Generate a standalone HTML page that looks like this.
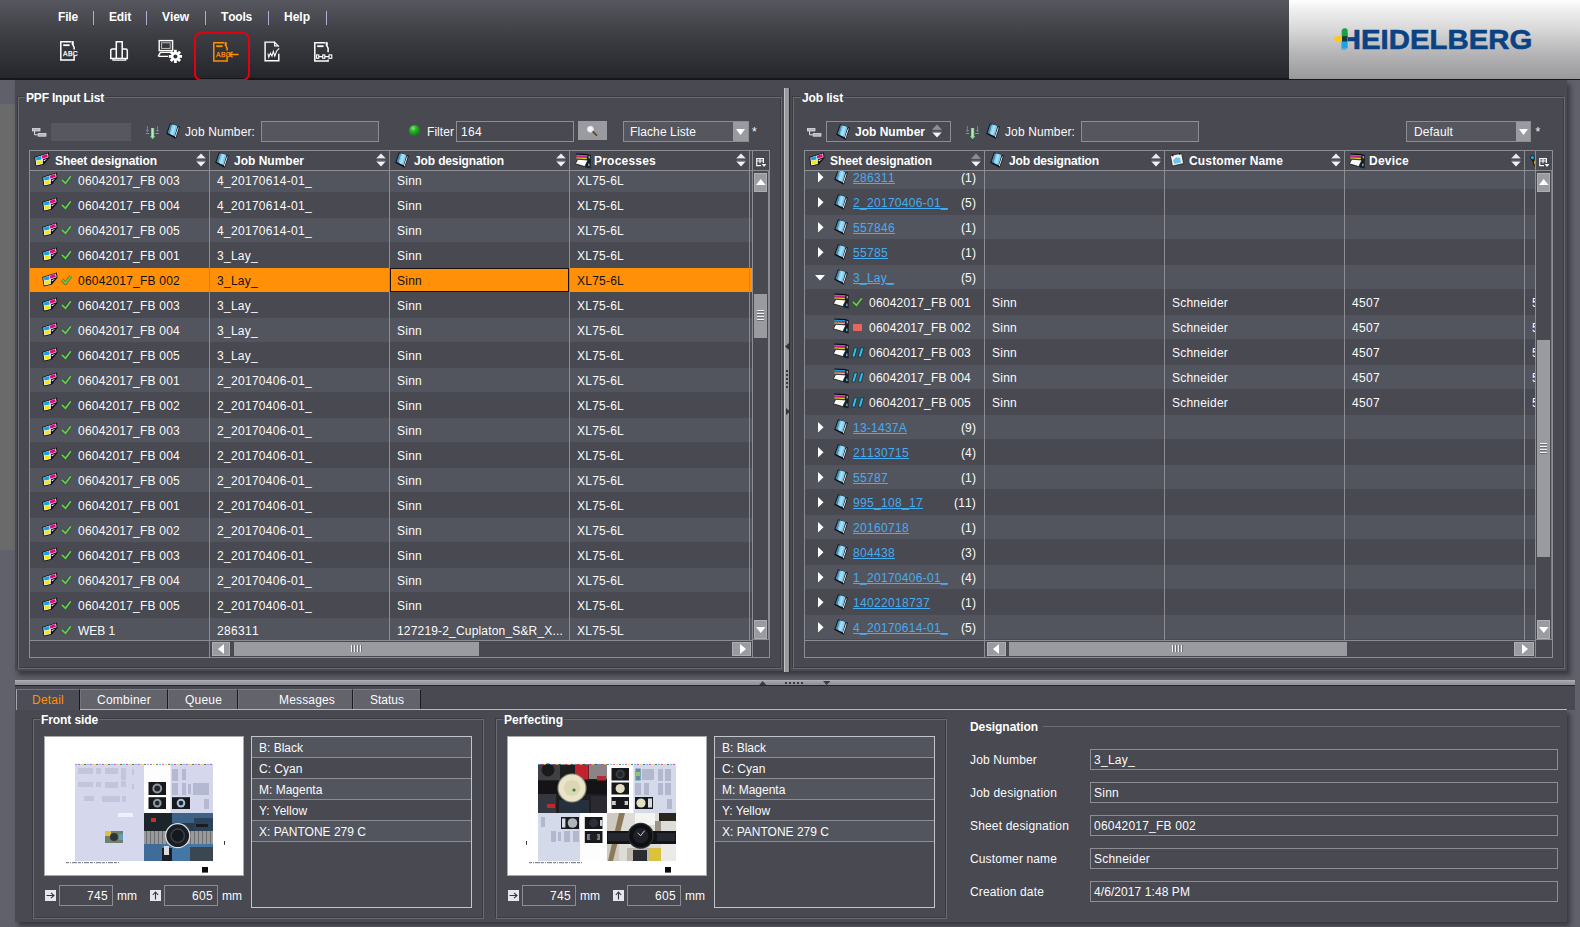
<!DOCTYPE html>
<html><head><meta charset="utf-8"><title>PPF Input List</title>
<style>
html,body{margin:0;padding:0}
body{width:1580px;height:927px;overflow:hidden;position:relative;background:#60616a;font-family:"Liberation Sans",Arial,sans-serif;font-size:12px;color:#fff}
div,svg,a,span{position:absolute;box-sizing:border-box}
.t{white-space:nowrap;line-height:14px;height:14px;color:#fbfbfc;font-kerning:none}
.b{white-space:nowrap;line-height:14px;height:14px;font-weight:bold;color:#fff;font-kerning:none}
.lk{color:#46acf2;text-decoration:underline}
.k{color:#101010}
.in{border:1px solid #8c8d93;background:#55565e}
.sb{background:#9a9ba0}
.sbb{box-shadow:inset 0 0 0 1px #adaeb3}
.pn{background:#484951}
.r0{background:#52555e}
.r1{background:#484951}
.fs{border:1px solid #65666d}
.lg{background:#484951;padding:0 1px;height:14px;line-height:14px;font-weight:bold;white-space:nowrap;font-kerning:none}
</style></head><body>

<div style="left:0px;top:0px;width:1580px;height:79px;background:linear-gradient(#57585f,#3d3e44 45%,#25262b)"></div>
<div style="left:0px;top:78px;width:1580px;height:2px;background:#17171a"></div>
<div style="left:1289px;top:0px;width:291px;height:78.5px;background:linear-gradient(#ffffff 0,#f1f1f1 10%,#d7d7d8 38%,#b7b7b9 66%,#99999b 100%)"></div>
<div class="b" style="left:58px;top:10px;letter-spacing:-0.168px;">File</div>
<div class="b" style="left:109px;top:10px;letter-spacing:-0.166px;">Edit</div>
<div class="b" style="left:162px;top:10px;letter-spacing:-0.086px;">View</div>
<div class="b" style="left:221px;top:10px;letter-spacing:-0.200px;">Tools</div>
<div class="b" style="left:284px;top:10px;letter-spacing:-0.001px;">Help</div>
<div style="left:93px;top:11px;width:1px;height:14px;background:#a9b0d4"></div>
<div style="left:146px;top:11px;width:1px;height:14px;background:#a9b0d4"></div>
<div style="left:205px;top:11px;width:1px;height:14px;background:#a9b0d4"></div>
<div style="left:268px;top:11px;width:1px;height:14px;background:#a9b0d4"></div>
<div style="left:326px;top:11px;width:1px;height:14px;background:#a9b0d4"></div>
<svg class="i" style="left:60px;top:41px" width="28" height="22" viewBox="0 0 28 22"><path d="M14.1 8.6 L14.1 6.2 L12.6 3.4 L12.6 0.8 M11.4 0.8 L0.8 0.8 L0.8 18.9 L14.1 18.9 L14.1 14.6" fill="none" stroke="#ffffff" stroke-width="1.5"/><path d="M12.7 0.1 L12.7 3.6" stroke="#ffffff" stroke-width="1.9"/><rect x="3.2" y="3.3" width="6.4" height="1.8" fill="#ffffff"/><text x="3.1" y="14.9" font-family="Liberation Sans,Arial,sans-serif" font-size="6.8" fill="#ffffff" stroke="#ffffff" stroke-width="0.25" letter-spacing="0.35">ABC</text></svg>
<svg class="i" style="left:109.5px;top:41px" width="20" height="22" viewBox="0 0 20 22"><path d="M6.3 17.4 L6.3 0.75 L12.2 0.75 L12.2 17.4" fill="none" stroke="#fff" stroke-width="1.5"/><path d="M6.3 8.1 L2.4 8.1 Q0.75 8.1 0.75 9.7 L0.75 17.4 L17.3 17.4 L17.3 9.7 Q17.3 8.1 15.7 8.1 L12.2 8.1" fill="none" stroke="#fff" stroke-width="1.5"/><path d="M3 17.4 L3 19.2 L15.6 19.2 L15.6 17.4" fill="none" stroke="#fff" stroke-width="1.3"/></svg>
<svg class="i" style="left:157px;top:39px" width="26" height="24" viewBox="0 0 26 24"><rect x="2.2" y="1.6" width="13.4" height="10" fill="none" stroke="#fff" stroke-width="1.4"/><rect x="4.6" y="3.8" width="8.6" height="5.6" fill="none" stroke="#c8c8cc" stroke-width="0.9"/><path d="M3.4 13.4 L14 13.4 M1.2 17.4 L11 17.4 M3.4 13.4 L1.2 17.4" fill="none" stroke="#fff" stroke-width="1.4"/><g transform="translate(18.4 17.4)"><g fill="#fff"><rect x="-1.4" y="-6.6" width="2.8" height="13.2" transform="rotate(0)"/><rect x="-1.4" y="-6.6" width="2.8" height="13.2" transform="rotate(45)"/><rect x="-1.4" y="-6.6" width="2.8" height="13.2" transform="rotate(90)"/><rect x="-1.4" y="-6.6" width="2.8" height="13.2" transform="rotate(135)"/></g><circle r="4.4" fill="#fff"/><circle r="2" fill="#2f3035"/></g></svg>
<div style="left:193.5px;top:31.5px;width:56.5px;height:49.5px;border:2.5px solid #e6000f;border-radius:7px"></div>
<svg class="i" style="left:213px;top:42px" width="28" height="22" viewBox="0 0 28 22"><path d="M14.1 8.6 L14.1 6.2 L12.6 3.4 L12.6 0.8 M11.4 0.8 L0.8 0.8 L0.8 18.9 L14.1 18.9 L14.1 14.6" fill="none" stroke="#ff9000" stroke-width="1.5"/><path d="M12.7 0.1 L12.7 3.6" stroke="#ff9000" stroke-width="1.9"/><rect x="3.2" y="3.3" width="6.4" height="1.8" fill="#ff9000"/><text x="3.1" y="14.9" font-family="Liberation Sans,Arial,sans-serif" font-size="6.8" fill="#ff9000" stroke="#ff9000" stroke-width="0.25" letter-spacing="0.35">ABC</text><path d="M25.6 12.5 L16.4 12.5 M19.6 9.7 L16.2 12.5 L19.6 15.3" fill="none" stroke="#ff9000" stroke-width="1.3"/></svg>
<svg class="i" style="left:264.2px;top:40.8px" width="19" height="22" viewBox="0 0 19 22"><path d="M10.6 1.1 L1.1 1.1 L1.1 19.8 L14.8 19.8 L14.8 12.8" fill="none" stroke="#fff" stroke-width="1.45"/><path d="M10.6 0.5 L10.6 4.9 L14.6 4.9 M10.6 1.1 L15 5.6" fill="none" stroke="#fff" stroke-width="1.1"/><path d="M3.9 12.5 L4.8 16.3 L6.4 12.2 L8 15.1 L9.3 10.3 L10.8 15.1 L12.7 10 L15.2 7.4" fill="none" stroke="#fff" stroke-width="1.05"/></svg>
<svg class="i" style="left:314px;top:42px" width="28" height="22" viewBox="0 0 28 22"><path d="M14.1 10.2 L14.1 6.2 L12.6 3.4 L12.6 0.8 M11.4 0.8 L0.8 0.8 L0.8 18.9 L14.1 18.9 L14.1 17.6" fill="none" stroke="#ffffff" stroke-width="1.5"/><path d="M12.7 0.1 L12.7 3.6" stroke="#ffffff" stroke-width="1.9"/><rect x="3.2" y="3.3" width="6.4" height="1.8" fill="#ffffff"/><g fill="none" stroke="#fff" stroke-width="1.1"><rect x="2.6" y="12.9" width="2.2" height="3.4"/><rect x="8.7" y="12.9" width="2.1" height="3.4"/><rect x="15" y="12.9" width="2.8" height="3.4"/><path d="M4.8 14.6 L8.7 14.6 M10.8 14.6 L15 14.6"/></g></svg>
<svg class="i" style="left:1330px;top:24px" width="214" height="30" viewBox="0 0 214 30"><text x="9.8" y="24.5" font-family="Liberation Sans,Arial,sans-serif" font-weight="bold" font-size="28" fill="#0b4382" textLength="192.6" lengthAdjust="spacingAndGlyphs" stroke="#0b4382" stroke-width="0.6">HEIDELBERG</text><linearGradient id="lgp" x1="0" y1="0" x2="0" y2="1"><stop offset="0" stop-color="#dadadb"/><stop offset="1" stop-color="#bbbbbd"/></linearGradient><rect x="11.4" y="3" width="6.6" height="22" fill="url(#lgp)"/><rect x="12" y="4.2" width="5.6" height="9.6" rx="2.4" fill="#17a046"/><rect x="12" y="9" width="5.6" height="4" fill="#17a046"/><path d="M3 14.9 L6.4 12.2 L13 12.2 L13 17.6 L6.4 17.6 Z" fill="#fdc816"/><rect x="12" y="17.4" width="5.6" height="7.2" fill="#19a6e4"/><rect x="12" y="12.2" width="5.6" height="5.4" fill="#143a3c"/></svg>
<div style="left:0px;top:80px;width:15px;height:24px;background:#5f6069"></div>
<div style="left:0px;top:104px;width:15px;height:446px;background:#6a6a6b"></div>
<div class="pn" style="left:15px;top:80px;width:1552px;height:591px;box-shadow:3px 4px 5px rgba(20,20,25,.55)"></div>
<div style="left:784px;top:88px;width:6px;height:584px;background:linear-gradient(90deg,#c4c5c9 0,#c4c5c9 1px,#98999e 1px,#98999e 5px,#2a2b2f 5px)"></div>
<svg class="i" style="left:785px;top:343px" width="4" height="7" viewBox="0 0 4 7"><path d="M4 0 L0 3.5 L4 7 Z" fill="#34353b"/></svg>
<svg class="i" style="left:786px;top:408px" width="4" height="7" viewBox="0 0 4 7"><path d="M0 0 L4 3.5 L0 7 Z" fill="#34353b"/></svg>
<div style="left:786px;top:370px;width:2px;height:2px;background:#3a3b41"></div>
<div style="left:786px;top:374px;width:2px;height:2px;background:#3a3b41"></div>
<div style="left:786px;top:378px;width:2px;height:2px;background:#3a3b41"></div>
<div style="left:786px;top:382px;width:2px;height:2px;background:#3a3b41"></div>
<div style="left:786px;top:386px;width:2px;height:2px;background:#3a3b41"></div>
<div style="left:17px;top:96px;width:764px;height:572px;border:1px solid #3b3c42"></div><div style="left:18px;top:97px;width:764px;height:572px;border:1px solid #6a6b72"></div>
<div style="left:792px;top:96px;width:772px;height:572px;border:1px solid #3b3c42"></div><div style="left:793px;top:97px;width:772px;height:572px;border:1px solid #6a6b72"></div>
<div class="lg" style="left:25px;top:91px;letter-spacing:-0.190px;">PPF Input List</div>
<div class="lg" style="left:801px;top:91px;letter-spacing:-0.126px;">Job list</div>
<svg class="i" style="left:32px;top:128px" width="15" height="10" viewBox="0 0 15 10"><rect x="0.4" y="0.4" width="7.6" height="2.6" fill="#b4b5bb" stroke="#e4e4e8" stroke-width="0.7"/><rect x="6.2" y="5.4" width="7.8" height="2.8" fill="#b4b5bb" stroke="#e4e4e8" stroke-width="0.7"/><path d="M2.6 3 L2.6 6.8 L6 6.8" fill="none" stroke="#e4e4e8" stroke-width="1"/></svg>
<div style="left:51px;top:123px;width:80px;height:18px;background:#56575f"></div>
<svg class="i" style="left:145px;top:125px" width="15" height="15" viewBox="0 0 15 15"><path d="M2.4 1 L2.4 6.4 M0.9 5 L2.4 6.6 L3.9 5 M12.5 1 L12.5 6.4 M11 5 L12.5 6.6 L14 5" stroke="#7f869c" stroke-width="0.9" fill="none"/><path d="M0.9 8.5 L4.2 8.5 M10.2 8.5 L14 8.5" stroke="#8f9ac0" stroke-width="0.9" fill="none"/><path d="M6 2.9 L9.2 2.9 L9.2 11.3 L10.4 11.3 L7.6 14.2 L4.8 11.3 L6 11.3 Z" fill="#7cd888"/><path d="M7.1 3.4 L8.1 3.4 L8.1 12 L7.1 12 Z" fill="#c4f0c8"/></svg>
<svg class="i" style="left:166px;top:123px" width="14" height="16" viewBox="0 0 14 16"><path d="M4 0.2 L13.9 3.8 L9.7 15.7 L0.2 10.8 Z" fill="#0e0e12"/><path d="M4.5 1.3 L6 1.8 L3.4 10.8 L1.5 9.9 Z" fill="#4a8aa8"/><path d="M5.9 1.3 L11.5 3.1 L8.6 13.2 L3.3 10.7 Z" fill="#7ccbf0"/><path d="M7.4 1.9 L9.6 2.6 L7 12.3 L4.8 11.3 Z" fill="#a6def8"/><path d="M12 4.2 L12.8 4.6 L9.6 14.4 L8.8 13.8 Z" fill="#f4f4f4"/></svg>
<div class="t" style="left:185px;top:125px;letter-spacing:0.119px;">Job Number:</div>
<div class="in" style="left:261px;top:121px;width:118px;height:21px;"></div>
<div style="left:409px;top:125px;width:11px;height:11px;border-radius:6px;background:radial-gradient(circle at 38% 30%,#86ee72 0,#2cb62a 28%,#178a1a 62%,#0b5810 100%)"></div>
<div class="t" style="left:427px;top:125px;letter-spacing:0.056px;">Filter</div>
<div style="left:456px;top:121px;width:118px;height:21px;border:1px solid #8c8d93;background:#484951"><div class="t" style="left:4px;top:3px;letter-spacing:0.326px;">164</div></div>
<div style="left:578px;top:121px;width:29px;height:19px;background:#9a9ba0"><svg class="i" style="left:8px;top:4px" width="13" height="12" viewBox="0 0 13 12"><circle cx="4.4" cy="4.2" r="3" fill="#f4f4f4" stroke="#e0e0e0" stroke-width="1"/><path d="M6.6 6.4 L11 10.6" stroke="#5a4a2a" stroke-width="1.8"/></svg></div>
<div class="in" style="left:623px;top:121px;width:126px;height:21px;"><div class="t" style="left:6px;top:3px;letter-spacing:0.108px;">Flache Liste</div><div style="left:109px;top:0px;width:15px;height:19px;background:#9a9ba0"><svg class="i" style="left:3px;top:7px" width="9" height="6" viewBox="0 0 9 6"><path d="M0 0 L9 0 L4.5 6 Z" fill="#fff"/></svg></div></div>
<div class="t" style="left:752px;top:125px;letter-spacing:0.330px;">*</div>
<svg class="i" style="left:807px;top:128px" width="15" height="10" viewBox="0 0 15 10"><rect x="0.4" y="0.4" width="7.6" height="2.6" fill="#b4b5bb" stroke="#e4e4e8" stroke-width="0.7"/><rect x="6.2" y="5.4" width="7.8" height="2.8" fill="#b4b5bb" stroke="#e4e4e8" stroke-width="0.7"/><path d="M2.6 3 L2.6 6.8 L6 6.8" fill="none" stroke="#e4e4e8" stroke-width="1"/></svg>
<div style="left:826px;top:121px;width:125px;height:21px;border:1px solid #8c8d93;background:#484951"><svg class="i" style="left:9px;top:2px" width="14" height="16" viewBox="0 0 14 16"><path d="M4 0.2 L13.9 3.8 L9.7 15.7 L0.2 10.8 Z" fill="#0e0e12"/><path d="M4.5 1.3 L6 1.8 L3.4 10.8 L1.5 9.9 Z" fill="#4a8aa8"/><path d="M5.9 1.3 L11.5 3.1 L8.6 13.2 L3.3 10.7 Z" fill="#7ccbf0"/><path d="M7.4 1.9 L9.6 2.6 L7 12.3 L4.8 11.3 Z" fill="#a6def8"/><path d="M12 4.2 L12.8 4.6 L9.6 14.4 L8.8 13.8 Z" fill="#f4f4f4"/></svg><div class="b" style="left:28px;top:3px;letter-spacing:-0.001px;">Job Number</div><svg class="i" style="left:104.5px;top:2px" width="10" height="14" viewBox="0 0 10 14"><path d="M5 0.4 L9.6 5.2 L0.4 5.2 Z" fill="#8e8f95"/><path d="M0.4 8.6 L9.6 8.6 L5 13.6 Z" fill="#f1f2fa"/><rect x="0.4" y="5.2" width="9.2" height="0.9" fill="#8f9098"/><rect x="0.4" y="7.7" width="9.2" height="0.9" fill="#8f9098"/></svg></div>
<svg class="i" style="left:965px;top:125px" width="15" height="15" viewBox="0 0 15 15"><path d="M2.4 1 L2.4 6.4 M0.9 5 L2.4 6.6 L3.9 5 M12.5 1 L12.5 6.4 M11 5 L12.5 6.6 L14 5" stroke="#7f869c" stroke-width="0.9" fill="none"/><path d="M0.9 8.5 L4.2 8.5 M10.2 8.5 L14 8.5" stroke="#8f9ac0" stroke-width="0.9" fill="none"/><path d="M6 2.9 L9.2 2.9 L9.2 11.3 L10.4 11.3 L7.6 14.2 L4.8 11.3 L6 11.3 Z" fill="#7cd888"/><path d="M7.1 3.4 L8.1 3.4 L8.1 12 L7.1 12 Z" fill="#c4f0c8"/></svg>
<svg class="i" style="left:986px;top:123px" width="14" height="16" viewBox="0 0 14 16"><path d="M4 0.2 L13.9 3.8 L9.7 15.7 L0.2 10.8 Z" fill="#0e0e12"/><path d="M4.5 1.3 L6 1.8 L3.4 10.8 L1.5 9.9 Z" fill="#4a8aa8"/><path d="M5.9 1.3 L11.5 3.1 L8.6 13.2 L3.3 10.7 Z" fill="#7ccbf0"/><path d="M7.4 1.9 L9.6 2.6 L7 12.3 L4.8 11.3 Z" fill="#a6def8"/><path d="M12 4.2 L12.8 4.6 L9.6 14.4 L8.8 13.8 Z" fill="#f4f4f4"/></svg>
<div class="t" style="left:1005px;top:125px;letter-spacing:0.119px;">Job Number:</div>
<div class="in" style="left:1081px;top:121px;width:118px;height:21px;"></div>
<div class="in" style="left:1406px;top:121px;width:125px;height:21px;"><div class="t" style="left:7px;top:3px;letter-spacing:0.140px;">Default</div><div style="left:109px;top:0px;width:14px;height:19px;background:#9a9ba0"><svg class="i" style="left:3px;top:7px" width="9" height="6" viewBox="0 0 9 6"><path d="M0 0 L9 0 L4.5 6 Z" fill="#fff"/></svg></div></div>
<div class="t" style="left:1535.5px;top:125px;letter-spacing:0.330px;">*</div>
<div style="left:29px;top:150px;width:741px;height:508px;border:1px solid #8c8d93;background:#484951"></div>
<div style="left:30px;top:171px;width:722px;height:469px;overflow:hidden"><div style="left:0px;top:-3px;width:722px;height:24px;background:#52555e"><svg class="i" style="left:12px;top:4px" width="16" height="15" viewBox="0 0 16 15"><path d="M0.2 5 L14.9 0.5 L15.5 5.8 L9.8 12.6 L1.8 14.6 Z" fill="#0c0c0e"/><path d="M1.3 5.5 L14 1.5 L14.5 5.3 L8.9 7.3 L8.8 12 L2.3 13.6 Z" fill="#fafafa"/><path d="M1.9 5.6 L7.3 4.1 L7.6 7.6 L2.4 8.6 Z" fill="#12a0e6"/><path d="M7.9 3.7 L13.3 2.1 L13.8 5.1 L8.3 6.8 Z" fill="#e0087e"/><path d="M2.5 8.9 L7.6 7.9 L7.9 11.4 L2.9 12.7 Z" fill="#fae600"/><path d="M9.4 8.2 L13.4 6.7 L10 9.6 Z" fill="#f0f0f0"/></svg><svg class="i" style="left:31px;top:7px" width="11" height="10" viewBox="0 0 11 10"><path d="M0.9 4.8 L4.5 8.4 L9.8 1.2" fill="none" stroke="#2b2d30" stroke-width="3.2" stroke-opacity=".55"/><path d="M0.9 4.8 L4.5 8.4 L9.8 1.2" fill="none" stroke="#60cc48" stroke-width="1.9"/></svg><div class="t" style="left:48px;top:6px;letter-spacing:0.216px;">06042017_FB 003</div><div class="t" style="left:187px;top:6px;letter-spacing:0.303px;">4_20170614-01_</div><div class="t" style="left:367px;top:6px;letter-spacing:0.246px;">Sinn</div><div class="t" style="left:547px;top:6px;letter-spacing:0.233px;">XL75-6L</div></div><div style="left:0px;top:22px;width:722px;height:24px;background:#484951"><svg class="i" style="left:12px;top:4px" width="16" height="15" viewBox="0 0 16 15"><path d="M0.2 5 L14.9 0.5 L15.5 5.8 L9.8 12.6 L1.8 14.6 Z" fill="#0c0c0e"/><path d="M1.3 5.5 L14 1.5 L14.5 5.3 L8.9 7.3 L8.8 12 L2.3 13.6 Z" fill="#fafafa"/><path d="M1.9 5.6 L7.3 4.1 L7.6 7.6 L2.4 8.6 Z" fill="#12a0e6"/><path d="M7.9 3.7 L13.3 2.1 L13.8 5.1 L8.3 6.8 Z" fill="#e0087e"/><path d="M2.5 8.9 L7.6 7.9 L7.9 11.4 L2.9 12.7 Z" fill="#fae600"/><path d="M9.4 8.2 L13.4 6.7 L10 9.6 Z" fill="#f0f0f0"/></svg><svg class="i" style="left:31px;top:7px" width="11" height="10" viewBox="0 0 11 10"><path d="M0.9 4.8 L4.5 8.4 L9.8 1.2" fill="none" stroke="#2b2d30" stroke-width="3.2" stroke-opacity=".55"/><path d="M0.9 4.8 L4.5 8.4 L9.8 1.2" fill="none" stroke="#60cc48" stroke-width="1.9"/></svg><div class="t" style="left:48px;top:6px;letter-spacing:0.216px;">06042017_FB 004</div><div class="t" style="left:187px;top:6px;letter-spacing:0.303px;">4_20170614-01_</div><div class="t" style="left:367px;top:6px;letter-spacing:0.246px;">Sinn</div><div class="t" style="left:547px;top:6px;letter-spacing:0.233px;">XL75-6L</div></div><div style="left:0px;top:47px;width:722px;height:24px;background:#52555e"><svg class="i" style="left:12px;top:4px" width="16" height="15" viewBox="0 0 16 15"><path d="M0.2 5 L14.9 0.5 L15.5 5.8 L9.8 12.6 L1.8 14.6 Z" fill="#0c0c0e"/><path d="M1.3 5.5 L14 1.5 L14.5 5.3 L8.9 7.3 L8.8 12 L2.3 13.6 Z" fill="#fafafa"/><path d="M1.9 5.6 L7.3 4.1 L7.6 7.6 L2.4 8.6 Z" fill="#12a0e6"/><path d="M7.9 3.7 L13.3 2.1 L13.8 5.1 L8.3 6.8 Z" fill="#e0087e"/><path d="M2.5 8.9 L7.6 7.9 L7.9 11.4 L2.9 12.7 Z" fill="#fae600"/><path d="M9.4 8.2 L13.4 6.7 L10 9.6 Z" fill="#f0f0f0"/></svg><svg class="i" style="left:31px;top:7px" width="11" height="10" viewBox="0 0 11 10"><path d="M0.9 4.8 L4.5 8.4 L9.8 1.2" fill="none" stroke="#2b2d30" stroke-width="3.2" stroke-opacity=".55"/><path d="M0.9 4.8 L4.5 8.4 L9.8 1.2" fill="none" stroke="#60cc48" stroke-width="1.9"/></svg><div class="t" style="left:48px;top:6px;letter-spacing:0.216px;">06042017_FB 005</div><div class="t" style="left:187px;top:6px;letter-spacing:0.303px;">4_20170614-01_</div><div class="t" style="left:367px;top:6px;letter-spacing:0.246px;">Sinn</div><div class="t" style="left:547px;top:6px;letter-spacing:0.233px;">XL75-6L</div></div><div style="left:0px;top:72px;width:722px;height:24px;background:#484951"><svg class="i" style="left:12px;top:4px" width="16" height="15" viewBox="0 0 16 15"><path d="M0.2 5 L14.9 0.5 L15.5 5.8 L9.8 12.6 L1.8 14.6 Z" fill="#0c0c0e"/><path d="M1.3 5.5 L14 1.5 L14.5 5.3 L8.9 7.3 L8.8 12 L2.3 13.6 Z" fill="#fafafa"/><path d="M1.9 5.6 L7.3 4.1 L7.6 7.6 L2.4 8.6 Z" fill="#12a0e6"/><path d="M7.9 3.7 L13.3 2.1 L13.8 5.1 L8.3 6.8 Z" fill="#e0087e"/><path d="M2.5 8.9 L7.6 7.9 L7.9 11.4 L2.9 12.7 Z" fill="#fae600"/><path d="M9.4 8.2 L13.4 6.7 L10 9.6 Z" fill="#f0f0f0"/></svg><svg class="i" style="left:31px;top:7px" width="11" height="10" viewBox="0 0 11 10"><path d="M0.9 4.8 L4.5 8.4 L9.8 1.2" fill="none" stroke="#2b2d30" stroke-width="3.2" stroke-opacity=".55"/><path d="M0.9 4.8 L4.5 8.4 L9.8 1.2" fill="none" stroke="#60cc48" stroke-width="1.9"/></svg><div class="t" style="left:48px;top:6px;letter-spacing:0.216px;">06042017_FB 001</div><div class="t" style="left:187px;top:6px;letter-spacing:0.272px;">3_Lay_</div><div class="t" style="left:367px;top:6px;letter-spacing:0.246px;">Sinn</div><div class="t" style="left:547px;top:6px;letter-spacing:0.233px;">XL75-6L</div></div><div style="left:0px;top:97px;width:722px;height:24px;background:#ff9008"><svg class="i" style="left:12px;top:4px" width="16" height="15" viewBox="0 0 16 15"><path d="M0.2 5 L14.9 0.5 L15.5 5.8 L9.8 12.6 L1.8 14.6 Z" fill="#0c0c0e"/><path d="M1.3 5.5 L14 1.5 L14.5 5.3 L8.9 7.3 L8.8 12 L2.3 13.6 Z" fill="#fafafa"/><path d="M1.9 5.6 L7.3 4.1 L7.6 7.6 L2.4 8.6 Z" fill="#12a0e6"/><path d="M7.9 3.7 L13.3 2.1 L13.8 5.1 L8.3 6.8 Z" fill="#e0087e"/><path d="M2.5 8.9 L7.6 7.9 L7.9 11.4 L2.9 12.7 Z" fill="#fae600"/><path d="M9.4 8.2 L13.4 6.7 L10 9.6 Z" fill="#f0f0f0"/></svg><svg class="i" style="left:31px;top:7px" width="11" height="10" viewBox="0 0 11 10"><path d="M0.9 4.8 L4.5 8.4 L9.8 1.2" fill="none" stroke="#2b2d30" stroke-width="3.2" stroke-opacity=".55"/><path d="M0.9 4.8 L4.5 8.4 L9.8 1.2" fill="none" stroke="#60cc48" stroke-width="1.9"/></svg><div class="t k" style="left:48px;top:6px;letter-spacing:0.216px;">06042017_FB 002</div><div class="t k" style="left:187px;top:6px;letter-spacing:0.272px;">3_Lay_</div><div class="t k" style="left:367px;top:6px;letter-spacing:0.246px;">Sinn</div><div class="t k" style="left:547px;top:6px;letter-spacing:0.233px;">XL75-6L</div><div style="left:360px;top:0px;width:179px;height:24px;border:1px solid #111"></div></div><div style="left:0px;top:122px;width:722px;height:24px;background:#484951"><svg class="i" style="left:12px;top:4px" width="16" height="15" viewBox="0 0 16 15"><path d="M0.2 5 L14.9 0.5 L15.5 5.8 L9.8 12.6 L1.8 14.6 Z" fill="#0c0c0e"/><path d="M1.3 5.5 L14 1.5 L14.5 5.3 L8.9 7.3 L8.8 12 L2.3 13.6 Z" fill="#fafafa"/><path d="M1.9 5.6 L7.3 4.1 L7.6 7.6 L2.4 8.6 Z" fill="#12a0e6"/><path d="M7.9 3.7 L13.3 2.1 L13.8 5.1 L8.3 6.8 Z" fill="#e0087e"/><path d="M2.5 8.9 L7.6 7.9 L7.9 11.4 L2.9 12.7 Z" fill="#fae600"/><path d="M9.4 8.2 L13.4 6.7 L10 9.6 Z" fill="#f0f0f0"/></svg><svg class="i" style="left:31px;top:7px" width="11" height="10" viewBox="0 0 11 10"><path d="M0.9 4.8 L4.5 8.4 L9.8 1.2" fill="none" stroke="#2b2d30" stroke-width="3.2" stroke-opacity=".55"/><path d="M0.9 4.8 L4.5 8.4 L9.8 1.2" fill="none" stroke="#60cc48" stroke-width="1.9"/></svg><div class="t" style="left:48px;top:6px;letter-spacing:0.216px;">06042017_FB 003</div><div class="t" style="left:187px;top:6px;letter-spacing:0.272px;">3_Lay_</div><div class="t" style="left:367px;top:6px;letter-spacing:0.246px;">Sinn</div><div class="t" style="left:547px;top:6px;letter-spacing:0.233px;">XL75-6L</div></div><div style="left:0px;top:147px;width:722px;height:24px;background:#52555e"><svg class="i" style="left:12px;top:4px" width="16" height="15" viewBox="0 0 16 15"><path d="M0.2 5 L14.9 0.5 L15.5 5.8 L9.8 12.6 L1.8 14.6 Z" fill="#0c0c0e"/><path d="M1.3 5.5 L14 1.5 L14.5 5.3 L8.9 7.3 L8.8 12 L2.3 13.6 Z" fill="#fafafa"/><path d="M1.9 5.6 L7.3 4.1 L7.6 7.6 L2.4 8.6 Z" fill="#12a0e6"/><path d="M7.9 3.7 L13.3 2.1 L13.8 5.1 L8.3 6.8 Z" fill="#e0087e"/><path d="M2.5 8.9 L7.6 7.9 L7.9 11.4 L2.9 12.7 Z" fill="#fae600"/><path d="M9.4 8.2 L13.4 6.7 L10 9.6 Z" fill="#f0f0f0"/></svg><svg class="i" style="left:31px;top:7px" width="11" height="10" viewBox="0 0 11 10"><path d="M0.9 4.8 L4.5 8.4 L9.8 1.2" fill="none" stroke="#2b2d30" stroke-width="3.2" stroke-opacity=".55"/><path d="M0.9 4.8 L4.5 8.4 L9.8 1.2" fill="none" stroke="#60cc48" stroke-width="1.9"/></svg><div class="t" style="left:48px;top:6px;letter-spacing:0.216px;">06042017_FB 004</div><div class="t" style="left:187px;top:6px;letter-spacing:0.272px;">3_Lay_</div><div class="t" style="left:367px;top:6px;letter-spacing:0.246px;">Sinn</div><div class="t" style="left:547px;top:6px;letter-spacing:0.233px;">XL75-6L</div></div><div style="left:0px;top:172px;width:722px;height:24px;background:#484951"><svg class="i" style="left:12px;top:4px" width="16" height="15" viewBox="0 0 16 15"><path d="M0.2 5 L14.9 0.5 L15.5 5.8 L9.8 12.6 L1.8 14.6 Z" fill="#0c0c0e"/><path d="M1.3 5.5 L14 1.5 L14.5 5.3 L8.9 7.3 L8.8 12 L2.3 13.6 Z" fill="#fafafa"/><path d="M1.9 5.6 L7.3 4.1 L7.6 7.6 L2.4 8.6 Z" fill="#12a0e6"/><path d="M7.9 3.7 L13.3 2.1 L13.8 5.1 L8.3 6.8 Z" fill="#e0087e"/><path d="M2.5 8.9 L7.6 7.9 L7.9 11.4 L2.9 12.7 Z" fill="#fae600"/><path d="M9.4 8.2 L13.4 6.7 L10 9.6 Z" fill="#f0f0f0"/></svg><svg class="i" style="left:31px;top:7px" width="11" height="10" viewBox="0 0 11 10"><path d="M0.9 4.8 L4.5 8.4 L9.8 1.2" fill="none" stroke="#2b2d30" stroke-width="3.2" stroke-opacity=".55"/><path d="M0.9 4.8 L4.5 8.4 L9.8 1.2" fill="none" stroke="#60cc48" stroke-width="1.9"/></svg><div class="t" style="left:48px;top:6px;letter-spacing:0.216px;">06042017_FB 005</div><div class="t" style="left:187px;top:6px;letter-spacing:0.272px;">3_Lay_</div><div class="t" style="left:367px;top:6px;letter-spacing:0.246px;">Sinn</div><div class="t" style="left:547px;top:6px;letter-spacing:0.233px;">XL75-6L</div></div><div style="left:0px;top:197px;width:722px;height:24px;background:#52555e"><svg class="i" style="left:12px;top:4px" width="16" height="15" viewBox="0 0 16 15"><path d="M0.2 5 L14.9 0.5 L15.5 5.8 L9.8 12.6 L1.8 14.6 Z" fill="#0c0c0e"/><path d="M1.3 5.5 L14 1.5 L14.5 5.3 L8.9 7.3 L8.8 12 L2.3 13.6 Z" fill="#fafafa"/><path d="M1.9 5.6 L7.3 4.1 L7.6 7.6 L2.4 8.6 Z" fill="#12a0e6"/><path d="M7.9 3.7 L13.3 2.1 L13.8 5.1 L8.3 6.8 Z" fill="#e0087e"/><path d="M2.5 8.9 L7.6 7.9 L7.9 11.4 L2.9 12.7 Z" fill="#fae600"/><path d="M9.4 8.2 L13.4 6.7 L10 9.6 Z" fill="#f0f0f0"/></svg><svg class="i" style="left:31px;top:7px" width="11" height="10" viewBox="0 0 11 10"><path d="M0.9 4.8 L4.5 8.4 L9.8 1.2" fill="none" stroke="#2b2d30" stroke-width="3.2" stroke-opacity=".55"/><path d="M0.9 4.8 L4.5 8.4 L9.8 1.2" fill="none" stroke="#60cc48" stroke-width="1.9"/></svg><div class="t" style="left:48px;top:6px;letter-spacing:0.216px;">06042017_FB 001</div><div class="t" style="left:187px;top:6px;letter-spacing:0.303px;">2_20170406-01_</div><div class="t" style="left:367px;top:6px;letter-spacing:0.246px;">Sinn</div><div class="t" style="left:547px;top:6px;letter-spacing:0.233px;">XL75-6L</div></div><div style="left:0px;top:222px;width:722px;height:24px;background:#484951"><svg class="i" style="left:12px;top:4px" width="16" height="15" viewBox="0 0 16 15"><path d="M0.2 5 L14.9 0.5 L15.5 5.8 L9.8 12.6 L1.8 14.6 Z" fill="#0c0c0e"/><path d="M1.3 5.5 L14 1.5 L14.5 5.3 L8.9 7.3 L8.8 12 L2.3 13.6 Z" fill="#fafafa"/><path d="M1.9 5.6 L7.3 4.1 L7.6 7.6 L2.4 8.6 Z" fill="#12a0e6"/><path d="M7.9 3.7 L13.3 2.1 L13.8 5.1 L8.3 6.8 Z" fill="#e0087e"/><path d="M2.5 8.9 L7.6 7.9 L7.9 11.4 L2.9 12.7 Z" fill="#fae600"/><path d="M9.4 8.2 L13.4 6.7 L10 9.6 Z" fill="#f0f0f0"/></svg><svg class="i" style="left:31px;top:7px" width="11" height="10" viewBox="0 0 11 10"><path d="M0.9 4.8 L4.5 8.4 L9.8 1.2" fill="none" stroke="#2b2d30" stroke-width="3.2" stroke-opacity=".55"/><path d="M0.9 4.8 L4.5 8.4 L9.8 1.2" fill="none" stroke="#60cc48" stroke-width="1.9"/></svg><div class="t" style="left:48px;top:6px;letter-spacing:0.216px;">06042017_FB 002</div><div class="t" style="left:187px;top:6px;letter-spacing:0.303px;">2_20170406-01_</div><div class="t" style="left:367px;top:6px;letter-spacing:0.246px;">Sinn</div><div class="t" style="left:547px;top:6px;letter-spacing:0.233px;">XL75-6L</div></div><div style="left:0px;top:247px;width:722px;height:24px;background:#52555e"><svg class="i" style="left:12px;top:4px" width="16" height="15" viewBox="0 0 16 15"><path d="M0.2 5 L14.9 0.5 L15.5 5.8 L9.8 12.6 L1.8 14.6 Z" fill="#0c0c0e"/><path d="M1.3 5.5 L14 1.5 L14.5 5.3 L8.9 7.3 L8.8 12 L2.3 13.6 Z" fill="#fafafa"/><path d="M1.9 5.6 L7.3 4.1 L7.6 7.6 L2.4 8.6 Z" fill="#12a0e6"/><path d="M7.9 3.7 L13.3 2.1 L13.8 5.1 L8.3 6.8 Z" fill="#e0087e"/><path d="M2.5 8.9 L7.6 7.9 L7.9 11.4 L2.9 12.7 Z" fill="#fae600"/><path d="M9.4 8.2 L13.4 6.7 L10 9.6 Z" fill="#f0f0f0"/></svg><svg class="i" style="left:31px;top:7px" width="11" height="10" viewBox="0 0 11 10"><path d="M0.9 4.8 L4.5 8.4 L9.8 1.2" fill="none" stroke="#2b2d30" stroke-width="3.2" stroke-opacity=".55"/><path d="M0.9 4.8 L4.5 8.4 L9.8 1.2" fill="none" stroke="#60cc48" stroke-width="1.9"/></svg><div class="t" style="left:48px;top:6px;letter-spacing:0.216px;">06042017_FB 003</div><div class="t" style="left:187px;top:6px;letter-spacing:0.303px;">2_20170406-01_</div><div class="t" style="left:367px;top:6px;letter-spacing:0.246px;">Sinn</div><div class="t" style="left:547px;top:6px;letter-spacing:0.233px;">XL75-6L</div></div><div style="left:0px;top:272px;width:722px;height:24px;background:#484951"><svg class="i" style="left:12px;top:4px" width="16" height="15" viewBox="0 0 16 15"><path d="M0.2 5 L14.9 0.5 L15.5 5.8 L9.8 12.6 L1.8 14.6 Z" fill="#0c0c0e"/><path d="M1.3 5.5 L14 1.5 L14.5 5.3 L8.9 7.3 L8.8 12 L2.3 13.6 Z" fill="#fafafa"/><path d="M1.9 5.6 L7.3 4.1 L7.6 7.6 L2.4 8.6 Z" fill="#12a0e6"/><path d="M7.9 3.7 L13.3 2.1 L13.8 5.1 L8.3 6.8 Z" fill="#e0087e"/><path d="M2.5 8.9 L7.6 7.9 L7.9 11.4 L2.9 12.7 Z" fill="#fae600"/><path d="M9.4 8.2 L13.4 6.7 L10 9.6 Z" fill="#f0f0f0"/></svg><svg class="i" style="left:31px;top:7px" width="11" height="10" viewBox="0 0 11 10"><path d="M0.9 4.8 L4.5 8.4 L9.8 1.2" fill="none" stroke="#2b2d30" stroke-width="3.2" stroke-opacity=".55"/><path d="M0.9 4.8 L4.5 8.4 L9.8 1.2" fill="none" stroke="#60cc48" stroke-width="1.9"/></svg><div class="t" style="left:48px;top:6px;letter-spacing:0.216px;">06042017_FB 004</div><div class="t" style="left:187px;top:6px;letter-spacing:0.303px;">2_20170406-01_</div><div class="t" style="left:367px;top:6px;letter-spacing:0.246px;">Sinn</div><div class="t" style="left:547px;top:6px;letter-spacing:0.233px;">XL75-6L</div></div><div style="left:0px;top:297px;width:722px;height:24px;background:#52555e"><svg class="i" style="left:12px;top:4px" width="16" height="15" viewBox="0 0 16 15"><path d="M0.2 5 L14.9 0.5 L15.5 5.8 L9.8 12.6 L1.8 14.6 Z" fill="#0c0c0e"/><path d="M1.3 5.5 L14 1.5 L14.5 5.3 L8.9 7.3 L8.8 12 L2.3 13.6 Z" fill="#fafafa"/><path d="M1.9 5.6 L7.3 4.1 L7.6 7.6 L2.4 8.6 Z" fill="#12a0e6"/><path d="M7.9 3.7 L13.3 2.1 L13.8 5.1 L8.3 6.8 Z" fill="#e0087e"/><path d="M2.5 8.9 L7.6 7.9 L7.9 11.4 L2.9 12.7 Z" fill="#fae600"/><path d="M9.4 8.2 L13.4 6.7 L10 9.6 Z" fill="#f0f0f0"/></svg><svg class="i" style="left:31px;top:7px" width="11" height="10" viewBox="0 0 11 10"><path d="M0.9 4.8 L4.5 8.4 L9.8 1.2" fill="none" stroke="#2b2d30" stroke-width="3.2" stroke-opacity=".55"/><path d="M0.9 4.8 L4.5 8.4 L9.8 1.2" fill="none" stroke="#60cc48" stroke-width="1.9"/></svg><div class="t" style="left:48px;top:6px;letter-spacing:0.216px;">06042017_FB 005</div><div class="t" style="left:187px;top:6px;letter-spacing:0.303px;">2_20170406-01_</div><div class="t" style="left:367px;top:6px;letter-spacing:0.246px;">Sinn</div><div class="t" style="left:547px;top:6px;letter-spacing:0.233px;">XL75-6L</div></div><div style="left:0px;top:322px;width:722px;height:24px;background:#484951"><svg class="i" style="left:12px;top:4px" width="16" height="15" viewBox="0 0 16 15"><path d="M0.2 5 L14.9 0.5 L15.5 5.8 L9.8 12.6 L1.8 14.6 Z" fill="#0c0c0e"/><path d="M1.3 5.5 L14 1.5 L14.5 5.3 L8.9 7.3 L8.8 12 L2.3 13.6 Z" fill="#fafafa"/><path d="M1.9 5.6 L7.3 4.1 L7.6 7.6 L2.4 8.6 Z" fill="#12a0e6"/><path d="M7.9 3.7 L13.3 2.1 L13.8 5.1 L8.3 6.8 Z" fill="#e0087e"/><path d="M2.5 8.9 L7.6 7.9 L7.9 11.4 L2.9 12.7 Z" fill="#fae600"/><path d="M9.4 8.2 L13.4 6.7 L10 9.6 Z" fill="#f0f0f0"/></svg><svg class="i" style="left:31px;top:7px" width="11" height="10" viewBox="0 0 11 10"><path d="M0.9 4.8 L4.5 8.4 L9.8 1.2" fill="none" stroke="#2b2d30" stroke-width="3.2" stroke-opacity=".55"/><path d="M0.9 4.8 L4.5 8.4 L9.8 1.2" fill="none" stroke="#60cc48" stroke-width="1.9"/></svg><div class="t" style="left:48px;top:6px;letter-spacing:0.216px;">06042017_FB 001</div><div class="t" style="left:187px;top:6px;letter-spacing:0.303px;">2_20170406-01_</div><div class="t" style="left:367px;top:6px;letter-spacing:0.246px;">Sinn</div><div class="t" style="left:547px;top:6px;letter-spacing:0.233px;">XL75-6L</div></div><div style="left:0px;top:347px;width:722px;height:24px;background:#52555e"><svg class="i" style="left:12px;top:4px" width="16" height="15" viewBox="0 0 16 15"><path d="M0.2 5 L14.9 0.5 L15.5 5.8 L9.8 12.6 L1.8 14.6 Z" fill="#0c0c0e"/><path d="M1.3 5.5 L14 1.5 L14.5 5.3 L8.9 7.3 L8.8 12 L2.3 13.6 Z" fill="#fafafa"/><path d="M1.9 5.6 L7.3 4.1 L7.6 7.6 L2.4 8.6 Z" fill="#12a0e6"/><path d="M7.9 3.7 L13.3 2.1 L13.8 5.1 L8.3 6.8 Z" fill="#e0087e"/><path d="M2.5 8.9 L7.6 7.9 L7.9 11.4 L2.9 12.7 Z" fill="#fae600"/><path d="M9.4 8.2 L13.4 6.7 L10 9.6 Z" fill="#f0f0f0"/></svg><svg class="i" style="left:31px;top:7px" width="11" height="10" viewBox="0 0 11 10"><path d="M0.9 4.8 L4.5 8.4 L9.8 1.2" fill="none" stroke="#2b2d30" stroke-width="3.2" stroke-opacity=".55"/><path d="M0.9 4.8 L4.5 8.4 L9.8 1.2" fill="none" stroke="#60cc48" stroke-width="1.9"/></svg><div class="t" style="left:48px;top:6px;letter-spacing:0.216px;">06042017_FB 002</div><div class="t" style="left:187px;top:6px;letter-spacing:0.303px;">2_20170406-01_</div><div class="t" style="left:367px;top:6px;letter-spacing:0.246px;">Sinn</div><div class="t" style="left:547px;top:6px;letter-spacing:0.233px;">XL75-6L</div></div><div style="left:0px;top:372px;width:722px;height:24px;background:#484951"><svg class="i" style="left:12px;top:4px" width="16" height="15" viewBox="0 0 16 15"><path d="M0.2 5 L14.9 0.5 L15.5 5.8 L9.8 12.6 L1.8 14.6 Z" fill="#0c0c0e"/><path d="M1.3 5.5 L14 1.5 L14.5 5.3 L8.9 7.3 L8.8 12 L2.3 13.6 Z" fill="#fafafa"/><path d="M1.9 5.6 L7.3 4.1 L7.6 7.6 L2.4 8.6 Z" fill="#12a0e6"/><path d="M7.9 3.7 L13.3 2.1 L13.8 5.1 L8.3 6.8 Z" fill="#e0087e"/><path d="M2.5 8.9 L7.6 7.9 L7.9 11.4 L2.9 12.7 Z" fill="#fae600"/><path d="M9.4 8.2 L13.4 6.7 L10 9.6 Z" fill="#f0f0f0"/></svg><svg class="i" style="left:31px;top:7px" width="11" height="10" viewBox="0 0 11 10"><path d="M0.9 4.8 L4.5 8.4 L9.8 1.2" fill="none" stroke="#2b2d30" stroke-width="3.2" stroke-opacity=".55"/><path d="M0.9 4.8 L4.5 8.4 L9.8 1.2" fill="none" stroke="#60cc48" stroke-width="1.9"/></svg><div class="t" style="left:48px;top:6px;letter-spacing:0.216px;">06042017_FB 003</div><div class="t" style="left:187px;top:6px;letter-spacing:0.303px;">2_20170406-01_</div><div class="t" style="left:367px;top:6px;letter-spacing:0.246px;">Sinn</div><div class="t" style="left:547px;top:6px;letter-spacing:0.233px;">XL75-6L</div></div><div style="left:0px;top:397px;width:722px;height:24px;background:#52555e"><svg class="i" style="left:12px;top:4px" width="16" height="15" viewBox="0 0 16 15"><path d="M0.2 5 L14.9 0.5 L15.5 5.8 L9.8 12.6 L1.8 14.6 Z" fill="#0c0c0e"/><path d="M1.3 5.5 L14 1.5 L14.5 5.3 L8.9 7.3 L8.8 12 L2.3 13.6 Z" fill="#fafafa"/><path d="M1.9 5.6 L7.3 4.1 L7.6 7.6 L2.4 8.6 Z" fill="#12a0e6"/><path d="M7.9 3.7 L13.3 2.1 L13.8 5.1 L8.3 6.8 Z" fill="#e0087e"/><path d="M2.5 8.9 L7.6 7.9 L7.9 11.4 L2.9 12.7 Z" fill="#fae600"/><path d="M9.4 8.2 L13.4 6.7 L10 9.6 Z" fill="#f0f0f0"/></svg><svg class="i" style="left:31px;top:7px" width="11" height="10" viewBox="0 0 11 10"><path d="M0.9 4.8 L4.5 8.4 L9.8 1.2" fill="none" stroke="#2b2d30" stroke-width="3.2" stroke-opacity=".55"/><path d="M0.9 4.8 L4.5 8.4 L9.8 1.2" fill="none" stroke="#60cc48" stroke-width="1.9"/></svg><div class="t" style="left:48px;top:6px;letter-spacing:0.216px;">06042017_FB 004</div><div class="t" style="left:187px;top:6px;letter-spacing:0.303px;">2_20170406-01_</div><div class="t" style="left:367px;top:6px;letter-spacing:0.246px;">Sinn</div><div class="t" style="left:547px;top:6px;letter-spacing:0.233px;">XL75-6L</div></div><div style="left:0px;top:422px;width:722px;height:24px;background:#484951"><svg class="i" style="left:12px;top:4px" width="16" height="15" viewBox="0 0 16 15"><path d="M0.2 5 L14.9 0.5 L15.5 5.8 L9.8 12.6 L1.8 14.6 Z" fill="#0c0c0e"/><path d="M1.3 5.5 L14 1.5 L14.5 5.3 L8.9 7.3 L8.8 12 L2.3 13.6 Z" fill="#fafafa"/><path d="M1.9 5.6 L7.3 4.1 L7.6 7.6 L2.4 8.6 Z" fill="#12a0e6"/><path d="M7.9 3.7 L13.3 2.1 L13.8 5.1 L8.3 6.8 Z" fill="#e0087e"/><path d="M2.5 8.9 L7.6 7.9 L7.9 11.4 L2.9 12.7 Z" fill="#fae600"/><path d="M9.4 8.2 L13.4 6.7 L10 9.6 Z" fill="#f0f0f0"/></svg><svg class="i" style="left:31px;top:7px" width="11" height="10" viewBox="0 0 11 10"><path d="M0.9 4.8 L4.5 8.4 L9.8 1.2" fill="none" stroke="#2b2d30" stroke-width="3.2" stroke-opacity=".55"/><path d="M0.9 4.8 L4.5 8.4 L9.8 1.2" fill="none" stroke="#60cc48" stroke-width="1.9"/></svg><div class="t" style="left:48px;top:6px;letter-spacing:0.216px;">06042017_FB 005</div><div class="t" style="left:187px;top:6px;letter-spacing:0.303px;">2_20170406-01_</div><div class="t" style="left:367px;top:6px;letter-spacing:0.246px;">Sinn</div><div class="t" style="left:547px;top:6px;letter-spacing:0.233px;">XL75-6L</div></div><div style="left:0px;top:447px;width:722px;height:24px;background:#52555e"><svg class="i" style="left:12px;top:4px" width="16" height="15" viewBox="0 0 16 15"><path d="M0.2 5 L14.9 0.5 L15.5 5.8 L9.8 12.6 L1.8 14.6 Z" fill="#0c0c0e"/><path d="M1.3 5.5 L14 1.5 L14.5 5.3 L8.9 7.3 L8.8 12 L2.3 13.6 Z" fill="#fafafa"/><path d="M1.9 5.6 L7.3 4.1 L7.6 7.6 L2.4 8.6 Z" fill="#12a0e6"/><path d="M7.9 3.7 L13.3 2.1 L13.8 5.1 L8.3 6.8 Z" fill="#e0087e"/><path d="M2.5 8.9 L7.6 7.9 L7.9 11.4 L2.9 12.7 Z" fill="#fae600"/><path d="M9.4 8.2 L13.4 6.7 L10 9.6 Z" fill="#f0f0f0"/></svg><svg class="i" style="left:31px;top:7px" width="11" height="10" viewBox="0 0 11 10"><path d="M0.9 4.8 L4.5 8.4 L9.8 1.2" fill="none" stroke="#2b2d30" stroke-width="3.2" stroke-opacity=".55"/><path d="M0.9 4.8 L4.5 8.4 L9.8 1.2" fill="none" stroke="#60cc48" stroke-width="1.9"/></svg><div class="t" style="left:48px;top:6px;letter-spacing:-0.068px;">WEB 1</div><div class="t" style="left:187px;top:6px;letter-spacing:0.326px;">286311</div><div class="t" style="left:367px;top:6px;letter-spacing:0.175px;">127219-2_Cuplaton_S&amp;R_X...</div><div class="t" style="left:547px;top:6px;letter-spacing:0.233px;">XL75-5L</div></div></div>
<svg class="i" style="left:34px;top:152px" width="16" height="15" viewBox="0 0 16 15"><path d="M0.2 5 L14.9 0.5 L15.5 5.8 L9.8 12.6 L1.8 14.6 Z" fill="#0c0c0e"/><path d="M1.3 5.5 L14 1.5 L14.5 5.3 L8.9 7.3 L8.8 12 L2.3 13.6 Z" fill="#fafafa"/><path d="M1.9 5.6 L7.3 4.1 L7.6 7.6 L2.4 8.6 Z" fill="#12a0e6"/><path d="M7.9 3.7 L13.3 2.1 L13.8 5.1 L8.3 6.8 Z" fill="#e0087e"/><path d="M2.5 8.9 L7.6 7.9 L7.9 11.4 L2.9 12.7 Z" fill="#fae600"/><path d="M9.4 8.2 L13.4 6.7 L10 9.6 Z" fill="#f0f0f0"/></svg><div class="b" style="left:55px;top:154px;letter-spacing:-0.079px;">Sheet designation</div><svg class="i" style="left:196px;top:153px" width="10" height="14" viewBox="0 0 10 14"><path d="M5 0.4 L9.6 5.2 L0.4 5.2 Z" fill="#e9ebf6"/><path d="M0.4 8.6 L9.6 8.6 L5 13.6 Z" fill="#f1f2fa"/><rect x="0.4" y="5.2" width="9.2" height="0.9" fill="#8f9098"/><rect x="0.4" y="7.7" width="9.2" height="0.9" fill="#8f9098"/></svg>
<svg class="i" style="left:215px;top:152px" width="14" height="16" viewBox="0 0 14 16"><path d="M4 0.2 L13.9 3.8 L9.7 15.7 L0.2 10.8 Z" fill="#0e0e12"/><path d="M4.5 1.3 L6 1.8 L3.4 10.8 L1.5 9.9 Z" fill="#4a8aa8"/><path d="M5.9 1.3 L11.5 3.1 L8.6 13.2 L3.3 10.7 Z" fill="#7ccbf0"/><path d="M7.4 1.9 L9.6 2.6 L7 12.3 L4.8 11.3 Z" fill="#a6def8"/><path d="M12 4.2 L12.8 4.6 L9.6 14.4 L8.8 13.8 Z" fill="#f4f4f4"/></svg><div class="b" style="left:234px;top:154px;letter-spacing:-0.001px;">Job Number</div><svg class="i" style="left:376px;top:153px" width="10" height="14" viewBox="0 0 10 14"><path d="M5 0.4 L9.6 5.2 L0.4 5.2 Z" fill="#e9ebf6"/><path d="M0.4 8.6 L9.6 8.6 L5 13.6 Z" fill="#f1f2fa"/><rect x="0.4" y="5.2" width="9.2" height="0.9" fill="#8f9098"/><rect x="0.4" y="7.7" width="9.2" height="0.9" fill="#8f9098"/></svg>
<svg class="i" style="left:395px;top:152px" width="14" height="16" viewBox="0 0 14 16"><path d="M4 0.2 L13.9 3.8 L9.7 15.7 L0.2 10.8 Z" fill="#0e0e12"/><path d="M4.5 1.3 L6 1.8 L3.4 10.8 L1.5 9.9 Z" fill="#4a8aa8"/><path d="M5.9 1.3 L11.5 3.1 L8.6 13.2 L3.3 10.7 Z" fill="#7ccbf0"/><path d="M7.4 1.9 L9.6 2.6 L7 12.3 L4.8 11.3 Z" fill="#a6def8"/><path d="M12 4.2 L12.8 4.6 L9.6 14.4 L8.8 13.8 Z" fill="#f4f4f4"/></svg><div class="b" style="left:414px;top:154px;letter-spacing:-0.134px;">Job designation</div><svg class="i" style="left:556px;top:153px" width="10" height="14" viewBox="0 0 10 14"><path d="M5 0.4 L9.6 5.2 L0.4 5.2 Z" fill="#e9ebf6"/><path d="M0.4 8.6 L9.6 8.6 L5 13.6 Z" fill="#f1f2fa"/><rect x="0.4" y="5.2" width="9.2" height="0.9" fill="#8f9098"/><rect x="0.4" y="7.7" width="9.2" height="0.9" fill="#8f9098"/></svg>
<svg class="i" style="left:575px;top:153px" width="16" height="16" viewBox="0 0 16 16"><path d="M1.4 0.4 L13.4 0.9 L13.4 2.2 L1.4 1.7 Z" fill="#0c0c10"/><path d="M1.5 1.8 L13.4 2.3 L13.4 3.5 L1.5 3 Z" fill="#169edc"/><path d="M1.5 3.1 L13.4 3.6 L13.4 4.8 L1.5 4.3 Z" fill="#e8148a"/><path d="M1.5 4.4 L13.4 4.9 L13.4 6.1 L1.5 5.6 Z" fill="#f4e018"/><path d="M12.6 1.4 L15.8 1.8 L15.6 15.4 L10.2 14.2 Z" fill="#1c1d22"/><path d="M2.8 6.2 L13 7 L9.8 13.6 L0.3 10.8 Z" fill="#fbfbfb" stroke="#16171a" stroke-width="0.8"/><rect x="13.6" y="3" width="1.3" height="2.4" fill="#58c8ee"/><rect x="13.2" y="10.6" width="1.3" height="2.6" fill="#58c8ee"/></svg><div class="b" style="left:594px;top:154px;letter-spacing:0.217px;">Processes</div><svg class="i" style="left:736px;top:153px" width="10" height="14" viewBox="0 0 10 14"><path d="M5 0.4 L9.6 5.2 L0.4 5.2 Z" fill="#e9ebf6"/><path d="M0.4 8.6 L9.6 8.6 L5 13.6 Z" fill="#f1f2fa"/><rect x="0.4" y="5.2" width="9.2" height="0.9" fill="#8f9098"/><rect x="0.4" y="7.7" width="9.2" height="0.9" fill="#8f9098"/></svg>
<div style="left:30px;top:170px;width:740px;height:1px;background:#8c8d93"></div>
<div style="left:209px;top:151px;width:1px;height:489px;background:#8c8d93"></div>
<div style="left:389px;top:151px;width:1px;height:489px;background:#8c8d93"></div>
<div style="left:569px;top:151px;width:1px;height:489px;background:#8c8d93"></div>
<div style="left:749px;top:151px;width:1px;height:489px;background:#8c8d93"></div>
<div style="left:752px;top:151px;width:1px;height:506px;background:#8c8d93"></div>
<svg class="i" style="left:756px;top:158px" width="11" height="10" viewBox="0 0 11 10"><path d="M7.4 5 L7.4 0.7 L0.7 0.7 L0.7 7.6 L5 7.6 M0.7 3 L7.4 3 M4 0.7 L4 5.2" fill="none" stroke="#f4f4f6" stroke-width="1.2"/><path d="M5.6 6 L10.4 6 L8 9 Z" fill="#f4f4f6"/></svg>
<div class="sb sbb" style="left:754px;top:173px;width:13px;height:19px;"><svg class="i" style="left:2px;top:6px" width="9.5" height="6" viewBox="0 0 9.5 6"><path d="M0 6 L4.75 0 L9.5 6 Z" fill="#fff"/></svg></div>
<div class="sb sbb" style="left:754px;top:620px;width:13px;height:19px;"><svg class="i" style="left:2px;top:7px" width="9.5" height="6" viewBox="0 0 9.5 6"><path d="M0 0 L9.5 0 L4.75 6 Z" fill="#fff"/></svg></div>
<div class="sb" style="left:754px;top:294px;width:13px;height:44px;"></div>
<div style="left:757px;top:310px;width:7px;height:1px;background:#f2f2f4"></div>
<div style="left:757px;top:311px;width:7px;height:1px;background:#6e6f77"></div>
<div style="left:757px;top:313px;width:7px;height:1px;background:#f2f2f4"></div>
<div style="left:757px;top:314px;width:7px;height:1px;background:#6e6f77"></div>
<div style="left:757px;top:316px;width:7px;height:1px;background:#f2f2f4"></div>
<div style="left:757px;top:317px;width:7px;height:1px;background:#6e6f77"></div>
<div style="left:757px;top:319px;width:7px;height:1px;background:#f2f2f4"></div>
<div style="left:757px;top:320px;width:7px;height:1px;background:#6e6f77"></div>
<div style="left:768px;top:171px;width:1px;height:469px;background:#8c8d93"></div>
<div style="left:753px;top:639px;width:17px;height:1px;background:#8c8d93"></div>
<div style="left:30px;top:640px;width:722px;height:1px;background:#8c8d93"></div>
<div style="left:209px;top:640px;width:1px;height:17px;background:#8c8d93"></div>
<div class="sb sbb" style="left:212px;top:642px;width:18px;height:14px;"><svg class="i" style="left:6px;top:2px" width="6" height="10" viewBox="0 0 6 10"><path d="M6 0 L0 5.0 L6 10 Z" fill="#fff"/></svg></div>
<div class="sb sbb" style="left:732px;top:642px;width:19px;height:14px;"><svg class="i" style="left:8px;top:2px" width="6" height="10" viewBox="0 0 6 10"><path d="M0 0 L6 5.0 L0 10 Z" fill="#fff"/></svg></div>
<div class="sb" style="left:234px;top:642px;width:245px;height:14px;"></div>
<div style="left:351px;top:645px;width:1px;height:7px;background:#f2f2f4"></div>
<div style="left:352px;top:645px;width:1px;height:7px;background:#6e6f77"></div>
<div style="left:354px;top:645px;width:1px;height:7px;background:#f2f2f4"></div>
<div style="left:355px;top:645px;width:1px;height:7px;background:#6e6f77"></div>
<div style="left:357px;top:645px;width:1px;height:7px;background:#f2f2f4"></div>
<div style="left:358px;top:645px;width:1px;height:7px;background:#6e6f77"></div>
<div style="left:360px;top:645px;width:1px;height:7px;background:#f2f2f4"></div>
<div style="left:361px;top:645px;width:1px;height:7px;background:#6e6f77"></div>
<div style="left:804px;top:150px;width:749px;height:508px;border:1px solid #8c8d93;background:#484951"></div>
<div style="left:805px;top:171px;width:730px;height:469px;overflow:hidden"><div style="left:0px;top:-6px;width:730px;height:24px;background:#52555e"><svg class="i" style="left:13px;top:7.2px" width="5.5" height="10.5" viewBox="0 0 5.5 10.5"><path d="M0 0 L5.5 5.25 L0 10.5 Z" fill="#fff"/></svg><svg class="i" style="left:29px;top:4px" width="14" height="16" viewBox="0 0 14 16"><path d="M4 0.2 L13.9 3.8 L9.7 15.7 L0.2 10.8 Z" fill="#0e0e12"/><path d="M4.5 1.3 L6 1.8 L3.4 10.8 L1.5 9.9 Z" fill="#4a8aa8"/><path d="M5.9 1.3 L11.5 3.1 L8.6 13.2 L3.3 10.7 Z" fill="#7ccbf0"/><path d="M7.4 1.9 L9.6 2.6 L7 12.3 L4.8 11.3 Z" fill="#a6def8"/><path d="M12 4.2 L12.8 4.6 L9.6 14.4 L8.8 13.8 Z" fill="#f4f4f4"/></svg><div class="t lk" style="left:48px;top:6px;letter-spacing:0.326px;">286311</div><div class="t" style="top:6px;letter-spacing:0.111px;right:559px">(1)</div></div><div style="left:0px;top:19px;width:730px;height:24px;background:#484951"><svg class="i" style="left:13px;top:7.2px" width="5.5" height="10.5" viewBox="0 0 5.5 10.5"><path d="M0 0 L5.5 5.25 L0 10.5 Z" fill="#fff"/></svg><svg class="i" style="left:29px;top:4px" width="14" height="16" viewBox="0 0 14 16"><path d="M4 0.2 L13.9 3.8 L9.7 15.7 L0.2 10.8 Z" fill="#0e0e12"/><path d="M4.5 1.3 L6 1.8 L3.4 10.8 L1.5 9.9 Z" fill="#4a8aa8"/><path d="M5.9 1.3 L11.5 3.1 L8.6 13.2 L3.3 10.7 Z" fill="#7ccbf0"/><path d="M7.4 1.9 L9.6 2.6 L7 12.3 L4.8 11.3 Z" fill="#a6def8"/><path d="M12 4.2 L12.8 4.6 L9.6 14.4 L8.8 13.8 Z" fill="#f4f4f4"/></svg><div class="t lk" style="left:48px;top:6px;letter-spacing:0.303px;">2_20170406-01_</div><div class="t" style="top:6px;letter-spacing:0.111px;right:559px">(5)</div></div><div style="left:0px;top:44px;width:730px;height:24px;background:#52555e"><svg class="i" style="left:13px;top:7.2px" width="5.5" height="10.5" viewBox="0 0 5.5 10.5"><path d="M0 0 L5.5 5.25 L0 10.5 Z" fill="#fff"/></svg><svg class="i" style="left:29px;top:4px" width="14" height="16" viewBox="0 0 14 16"><path d="M4 0.2 L13.9 3.8 L9.7 15.7 L0.2 10.8 Z" fill="#0e0e12"/><path d="M4.5 1.3 L6 1.8 L3.4 10.8 L1.5 9.9 Z" fill="#4a8aa8"/><path d="M5.9 1.3 L11.5 3.1 L8.6 13.2 L3.3 10.7 Z" fill="#7ccbf0"/><path d="M7.4 1.9 L9.6 2.6 L7 12.3 L4.8 11.3 Z" fill="#a6def8"/><path d="M12 4.2 L12.8 4.6 L9.6 14.4 L8.8 13.8 Z" fill="#f4f4f4"/></svg><div class="t lk" style="left:48px;top:6px;letter-spacing:0.326px;">557846</div><div class="t" style="top:6px;letter-spacing:0.111px;right:559px">(1)</div></div><div style="left:0px;top:69px;width:730px;height:24px;background:#484951"><svg class="i" style="left:13px;top:7.2px" width="5.5" height="10.5" viewBox="0 0 5.5 10.5"><path d="M0 0 L5.5 5.25 L0 10.5 Z" fill="#fff"/></svg><svg class="i" style="left:29px;top:4px" width="14" height="16" viewBox="0 0 14 16"><path d="M4 0.2 L13.9 3.8 L9.7 15.7 L0.2 10.8 Z" fill="#0e0e12"/><path d="M4.5 1.3 L6 1.8 L3.4 10.8 L1.5 9.9 Z" fill="#4a8aa8"/><path d="M5.9 1.3 L11.5 3.1 L8.6 13.2 L3.3 10.7 Z" fill="#7ccbf0"/><path d="M7.4 1.9 L9.6 2.6 L7 12.3 L4.8 11.3 Z" fill="#a6def8"/><path d="M12 4.2 L12.8 4.6 L9.6 14.4 L8.8 13.8 Z" fill="#f4f4f4"/></svg><div class="t lk" style="left:48px;top:6px;letter-spacing:0.326px;">55785</div><div class="t" style="top:6px;letter-spacing:0.111px;right:559px">(1)</div></div><div style="left:0px;top:94px;width:730px;height:24px;background:#52555e"><svg class="i" style="left:10px;top:10px" width="10" height="5.5" viewBox="0 0 10 5.5"><path d="M0 0 L10 0 L5.0 5.5 Z" fill="#fff"/></svg><svg class="i" style="left:29px;top:4px" width="14" height="16" viewBox="0 0 14 16"><path d="M4 0.2 L13.9 3.8 L9.7 15.7 L0.2 10.8 Z" fill="#0e0e12"/><path d="M4.5 1.3 L6 1.8 L3.4 10.8 L1.5 9.9 Z" fill="#4a8aa8"/><path d="M5.9 1.3 L11.5 3.1 L8.6 13.2 L3.3 10.7 Z" fill="#7ccbf0"/><path d="M7.4 1.9 L9.6 2.6 L7 12.3 L4.8 11.3 Z" fill="#a6def8"/><path d="M12 4.2 L12.8 4.6 L9.6 14.4 L8.8 13.8 Z" fill="#f4f4f4"/></svg><div class="t lk" style="left:48px;top:6px;letter-spacing:0.272px;">3_Lay_</div><div class="t" style="top:6px;letter-spacing:0.111px;right:559px">(5)</div></div><div style="left:0px;top:119px;width:730px;height:24px;background:#484951"><svg class="i" style="left:28px;top:3px" width="16" height="16" viewBox="0 0 16 16"><path d="M1.4 0.4 L13.4 0.9 L13.4 2.2 L1.4 1.7 Z" fill="#0c0c10"/><path d="M1.5 1.8 L13.4 2.3 L13.4 3.5 L1.5 3 Z" fill="#169edc"/><path d="M1.5 3.1 L13.4 3.6 L13.4 4.8 L1.5 4.3 Z" fill="#e8148a"/><path d="M1.5 4.4 L13.4 4.9 L13.4 6.1 L1.5 5.6 Z" fill="#f4e018"/><path d="M12.6 1.4 L15.8 1.8 L15.6 15.4 L10.2 14.2 Z" fill="#1c1d22"/><path d="M2.8 6.2 L13 7 L9.8 13.6 L0.3 10.8 Z" fill="#fbfbfb" stroke="#16171a" stroke-width="0.8"/><rect x="13.6" y="3" width="1.3" height="2.4" fill="#58c8ee"/><rect x="13.2" y="10.6" width="1.3" height="2.6" fill="#58c8ee"/></svg><svg class="i" style="left:47px;top:6.5px" width="11" height="10" viewBox="0 0 11 10"><path d="M0.9 4.8 L4.5 8.4 L9.8 1.2" fill="none" stroke="#2b2d30" stroke-width="3.2" stroke-opacity=".55"/><path d="M0.9 4.8 L4.5 8.4 L9.8 1.2" fill="none" stroke="#60cc48" stroke-width="1.9"/></svg><div class="t" style="left:64px;top:6px;letter-spacing:0.216px;">06042017_FB 001</div><div class="t" style="left:187px;top:6px;letter-spacing:0.246px;">Sinn</div><div class="t" style="left:367px;top:6px;letter-spacing:0.218px;">Schneider</div><div class="t" style="left:547px;top:6px;letter-spacing:0.326px;">4507</div><div class="t" style="left:727px;top:6px;letter-spacing:0.326px;">5</div></div><div style="left:0px;top:144px;width:730px;height:24px;background:#52555e"><svg class="i" style="left:28px;top:3px" width="16" height="16" viewBox="0 0 16 16"><path d="M1.4 0.4 L13.4 0.9 L13.4 2.2 L1.4 1.7 Z" fill="#0c0c10"/><path d="M1.5 1.8 L13.4 2.3 L13.4 3.5 L1.5 3 Z" fill="#169edc"/><path d="M1.5 3.1 L13.4 3.6 L13.4 4.8 L1.5 4.3 Z" fill="#e8148a"/><path d="M1.5 4.4 L13.4 4.9 L13.4 6.1 L1.5 5.6 Z" fill="#f4e018"/><path d="M12.6 1.4 L15.8 1.8 L15.6 15.4 L10.2 14.2 Z" fill="#1c1d22"/><path d="M2.8 6.2 L13 7 L9.8 13.6 L0.3 10.8 Z" fill="#fbfbfb" stroke="#16171a" stroke-width="0.8"/><rect x="13.6" y="3" width="1.3" height="2.4" fill="#58c8ee"/><rect x="13.2" y="10.6" width="1.3" height="2.6" fill="#58c8ee"/></svg><div class="a" style="left:48px;top:8.5px;width:8.6px;height:7.6px;background:#e8665e;border-radius:1px"></div><div class="t" style="left:64px;top:6px;letter-spacing:0.216px;">06042017_FB 002</div><div class="t" style="left:187px;top:6px;letter-spacing:0.246px;">Sinn</div><div class="t" style="left:367px;top:6px;letter-spacing:0.218px;">Schneider</div><div class="t" style="left:547px;top:6px;letter-spacing:0.326px;">4507</div><div class="t" style="left:727px;top:6px;letter-spacing:0.326px;">5</div></div><div style="left:0px;top:169px;width:730px;height:24px;background:#484951"><svg class="i" style="left:28px;top:3px" width="16" height="16" viewBox="0 0 16 16"><path d="M1.4 0.4 L13.4 0.9 L13.4 2.2 L1.4 1.7 Z" fill="#0c0c10"/><path d="M1.5 1.8 L13.4 2.3 L13.4 3.5 L1.5 3 Z" fill="#169edc"/><path d="M1.5 3.1 L13.4 3.6 L13.4 4.8 L1.5 4.3 Z" fill="#e8148a"/><path d="M1.5 4.4 L13.4 4.9 L13.4 6.1 L1.5 5.6 Z" fill="#f4e018"/><path d="M12.6 1.4 L15.8 1.8 L15.6 15.4 L10.2 14.2 Z" fill="#1c1d22"/><path d="M2.8 6.2 L13 7 L9.8 13.6 L0.3 10.8 Z" fill="#fbfbfb" stroke="#16171a" stroke-width="0.8"/><rect x="13.6" y="3" width="1.3" height="2.4" fill="#58c8ee"/><rect x="13.2" y="10.6" width="1.3" height="2.6" fill="#58c8ee"/></svg><svg class="i" style="left:46px;top:7px" width="14" height="11" viewBox="0 0 14 11"><path d="M3.4 0.8 L6.4 0.8 L3.8 10 L0.8 10 Z" fill="#2cc4ee" stroke="#1c2a34" stroke-width="0.8"/><path d="M9.8 0.8 L12.8 0.8 L10.2 10 L7.2 10 Z" fill="#2cc4ee" stroke="#1c2a34" stroke-width="0.8"/></svg><div class="t" style="left:64px;top:6px;letter-spacing:0.216px;">06042017_FB 003</div><div class="t" style="left:187px;top:6px;letter-spacing:0.246px;">Sinn</div><div class="t" style="left:367px;top:6px;letter-spacing:0.218px;">Schneider</div><div class="t" style="left:547px;top:6px;letter-spacing:0.326px;">4507</div><div class="t" style="left:727px;top:6px;letter-spacing:0.326px;">5</div></div><div style="left:0px;top:194px;width:730px;height:24px;background:#52555e"><svg class="i" style="left:28px;top:3px" width="16" height="16" viewBox="0 0 16 16"><path d="M1.4 0.4 L13.4 0.9 L13.4 2.2 L1.4 1.7 Z" fill="#0c0c10"/><path d="M1.5 1.8 L13.4 2.3 L13.4 3.5 L1.5 3 Z" fill="#169edc"/><path d="M1.5 3.1 L13.4 3.6 L13.4 4.8 L1.5 4.3 Z" fill="#e8148a"/><path d="M1.5 4.4 L13.4 4.9 L13.4 6.1 L1.5 5.6 Z" fill="#f4e018"/><path d="M12.6 1.4 L15.8 1.8 L15.6 15.4 L10.2 14.2 Z" fill="#1c1d22"/><path d="M2.8 6.2 L13 7 L9.8 13.6 L0.3 10.8 Z" fill="#fbfbfb" stroke="#16171a" stroke-width="0.8"/><rect x="13.6" y="3" width="1.3" height="2.4" fill="#58c8ee"/><rect x="13.2" y="10.6" width="1.3" height="2.6" fill="#58c8ee"/></svg><svg class="i" style="left:46px;top:7px" width="14" height="11" viewBox="0 0 14 11"><path d="M3.4 0.8 L6.4 0.8 L3.8 10 L0.8 10 Z" fill="#2cc4ee" stroke="#1c2a34" stroke-width="0.8"/><path d="M9.8 0.8 L12.8 0.8 L10.2 10 L7.2 10 Z" fill="#2cc4ee" stroke="#1c2a34" stroke-width="0.8"/></svg><div class="t" style="left:64px;top:6px;letter-spacing:0.216px;">06042017_FB 004</div><div class="t" style="left:187px;top:6px;letter-spacing:0.246px;">Sinn</div><div class="t" style="left:367px;top:6px;letter-spacing:0.218px;">Schneider</div><div class="t" style="left:547px;top:6px;letter-spacing:0.326px;">4507</div><div class="t" style="left:727px;top:6px;letter-spacing:0.326px;">5</div></div><div style="left:0px;top:219px;width:730px;height:24px;background:#484951"><svg class="i" style="left:28px;top:3px" width="16" height="16" viewBox="0 0 16 16"><path d="M1.4 0.4 L13.4 0.9 L13.4 2.2 L1.4 1.7 Z" fill="#0c0c10"/><path d="M1.5 1.8 L13.4 2.3 L13.4 3.5 L1.5 3 Z" fill="#169edc"/><path d="M1.5 3.1 L13.4 3.6 L13.4 4.8 L1.5 4.3 Z" fill="#e8148a"/><path d="M1.5 4.4 L13.4 4.9 L13.4 6.1 L1.5 5.6 Z" fill="#f4e018"/><path d="M12.6 1.4 L15.8 1.8 L15.6 15.4 L10.2 14.2 Z" fill="#1c1d22"/><path d="M2.8 6.2 L13 7 L9.8 13.6 L0.3 10.8 Z" fill="#fbfbfb" stroke="#16171a" stroke-width="0.8"/><rect x="13.6" y="3" width="1.3" height="2.4" fill="#58c8ee"/><rect x="13.2" y="10.6" width="1.3" height="2.6" fill="#58c8ee"/></svg><svg class="i" style="left:46px;top:7px" width="14" height="11" viewBox="0 0 14 11"><path d="M3.4 0.8 L6.4 0.8 L3.8 10 L0.8 10 Z" fill="#2cc4ee" stroke="#1c2a34" stroke-width="0.8"/><path d="M9.8 0.8 L12.8 0.8 L10.2 10 L7.2 10 Z" fill="#2cc4ee" stroke="#1c2a34" stroke-width="0.8"/></svg><div class="t" style="left:64px;top:6px;letter-spacing:0.216px;">06042017_FB 005</div><div class="t" style="left:187px;top:6px;letter-spacing:0.246px;">Sinn</div><div class="t" style="left:367px;top:6px;letter-spacing:0.218px;">Schneider</div><div class="t" style="left:547px;top:6px;letter-spacing:0.326px;">4507</div><div class="t" style="left:727px;top:6px;letter-spacing:0.326px;">5</div></div><div style="left:0px;top:244px;width:730px;height:24px;background:#52555e"><svg class="i" style="left:13px;top:7.2px" width="5.5" height="10.5" viewBox="0 0 5.5 10.5"><path d="M0 0 L5.5 5.25 L0 10.5 Z" fill="#fff"/></svg><svg class="i" style="left:29px;top:4px" width="14" height="16" viewBox="0 0 14 16"><path d="M4 0.2 L13.9 3.8 L9.7 15.7 L0.2 10.8 Z" fill="#0e0e12"/><path d="M4.5 1.3 L6 1.8 L3.4 10.8 L1.5 9.9 Z" fill="#4a8aa8"/><path d="M5.9 1.3 L11.5 3.1 L8.6 13.2 L3.3 10.7 Z" fill="#7ccbf0"/><path d="M7.4 1.9 L9.6 2.6 L7 12.3 L4.8 11.3 Z" fill="#a6def8"/><path d="M12 4.2 L12.8 4.6 L9.6 14.4 L8.8 13.8 Z" fill="#f4f4f4"/></svg><div class="t lk" style="left:48px;top:6px;letter-spacing:0.245px;">13-1437A</div><div class="t" style="top:6px;letter-spacing:0.111px;right:559px">(9)</div></div><div style="left:0px;top:269px;width:730px;height:24px;background:#484951"><svg class="i" style="left:13px;top:7.2px" width="5.5" height="10.5" viewBox="0 0 5.5 10.5"><path d="M0 0 L5.5 5.25 L0 10.5 Z" fill="#fff"/></svg><svg class="i" style="left:29px;top:4px" width="14" height="16" viewBox="0 0 14 16"><path d="M4 0.2 L13.9 3.8 L9.7 15.7 L0.2 10.8 Z" fill="#0e0e12"/><path d="M4.5 1.3 L6 1.8 L3.4 10.8 L1.5 9.9 Z" fill="#4a8aa8"/><path d="M5.9 1.3 L11.5 3.1 L8.6 13.2 L3.3 10.7 Z" fill="#7ccbf0"/><path d="M7.4 1.9 L9.6 2.6 L7 12.3 L4.8 11.3 Z" fill="#a6def8"/><path d="M12 4.2 L12.8 4.6 L9.6 14.4 L8.8 13.8 Z" fill="#f4f4f4"/></svg><div class="t lk" style="left:48px;top:6px;letter-spacing:0.326px;">21130715</div><div class="t" style="top:6px;letter-spacing:0.111px;right:559px">(4)</div></div><div style="left:0px;top:294px;width:730px;height:24px;background:#52555e"><svg class="i" style="left:13px;top:7.2px" width="5.5" height="10.5" viewBox="0 0 5.5 10.5"><path d="M0 0 L5.5 5.25 L0 10.5 Z" fill="#fff"/></svg><svg class="i" style="left:29px;top:4px" width="14" height="16" viewBox="0 0 14 16"><path d="M4 0.2 L13.9 3.8 L9.7 15.7 L0.2 10.8 Z" fill="#0e0e12"/><path d="M4.5 1.3 L6 1.8 L3.4 10.8 L1.5 9.9 Z" fill="#4a8aa8"/><path d="M5.9 1.3 L11.5 3.1 L8.6 13.2 L3.3 10.7 Z" fill="#7ccbf0"/><path d="M7.4 1.9 L9.6 2.6 L7 12.3 L4.8 11.3 Z" fill="#a6def8"/><path d="M12 4.2 L12.8 4.6 L9.6 14.4 L8.8 13.8 Z" fill="#f4f4f4"/></svg><div class="t lk" style="left:48px;top:6px;letter-spacing:0.326px;">55787</div><div class="t" style="top:6px;letter-spacing:0.111px;right:559px">(1)</div></div><div style="left:0px;top:319px;width:730px;height:24px;background:#484951"><svg class="i" style="left:13px;top:7.2px" width="5.5" height="10.5" viewBox="0 0 5.5 10.5"><path d="M0 0 L5.5 5.25 L0 10.5 Z" fill="#fff"/></svg><svg class="i" style="left:29px;top:4px" width="14" height="16" viewBox="0 0 14 16"><path d="M4 0.2 L13.9 3.8 L9.7 15.7 L0.2 10.8 Z" fill="#0e0e12"/><path d="M4.5 1.3 L6 1.8 L3.4 10.8 L1.5 9.9 Z" fill="#4a8aa8"/><path d="M5.9 1.3 L11.5 3.1 L8.6 13.2 L3.3 10.7 Z" fill="#7ccbf0"/><path d="M7.4 1.9 L9.6 2.6 L7 12.3 L4.8 11.3 Z" fill="#a6def8"/><path d="M12 4.2 L12.8 4.6 L9.6 14.4 L8.8 13.8 Z" fill="#f4f4f4"/></svg><div class="t lk" style="left:48px;top:6px;letter-spacing:0.326px;">995_108_17</div><div class="t" style="top:6px;letter-spacing:0.165px;right:559px">(11)</div></div><div style="left:0px;top:344px;width:730px;height:24px;background:#52555e"><svg class="i" style="left:13px;top:7.2px" width="5.5" height="10.5" viewBox="0 0 5.5 10.5"><path d="M0 0 L5.5 5.25 L0 10.5 Z" fill="#fff"/></svg><svg class="i" style="left:29px;top:4px" width="14" height="16" viewBox="0 0 14 16"><path d="M4 0.2 L13.9 3.8 L9.7 15.7 L0.2 10.8 Z" fill="#0e0e12"/><path d="M4.5 1.3 L6 1.8 L3.4 10.8 L1.5 9.9 Z" fill="#4a8aa8"/><path d="M5.9 1.3 L11.5 3.1 L8.6 13.2 L3.3 10.7 Z" fill="#7ccbf0"/><path d="M7.4 1.9 L9.6 2.6 L7 12.3 L4.8 11.3 Z" fill="#a6def8"/><path d="M12 4.2 L12.8 4.6 L9.6 14.4 L8.8 13.8 Z" fill="#f4f4f4"/></svg><div class="t lk" style="left:48px;top:6px;letter-spacing:0.326px;">20160718</div><div class="t" style="top:6px;letter-spacing:0.111px;right:559px">(1)</div></div><div style="left:0px;top:369px;width:730px;height:24px;background:#484951"><svg class="i" style="left:13px;top:7.2px" width="5.5" height="10.5" viewBox="0 0 5.5 10.5"><path d="M0 0 L5.5 5.25 L0 10.5 Z" fill="#fff"/></svg><svg class="i" style="left:29px;top:4px" width="14" height="16" viewBox="0 0 14 16"><path d="M4 0.2 L13.9 3.8 L9.7 15.7 L0.2 10.8 Z" fill="#0e0e12"/><path d="M4.5 1.3 L6 1.8 L3.4 10.8 L1.5 9.9 Z" fill="#4a8aa8"/><path d="M5.9 1.3 L11.5 3.1 L8.6 13.2 L3.3 10.7 Z" fill="#7ccbf0"/><path d="M7.4 1.9 L9.6 2.6 L7 12.3 L4.8 11.3 Z" fill="#a6def8"/><path d="M12 4.2 L12.8 4.6 L9.6 14.4 L8.8 13.8 Z" fill="#f4f4f4"/></svg><div class="t lk" style="left:48px;top:6px;letter-spacing:0.326px;">804438</div><div class="t" style="top:6px;letter-spacing:0.111px;right:559px">(3)</div></div><div style="left:0px;top:394px;width:730px;height:24px;background:#52555e"><svg class="i" style="left:13px;top:7.2px" width="5.5" height="10.5" viewBox="0 0 5.5 10.5"><path d="M0 0 L5.5 5.25 L0 10.5 Z" fill="#fff"/></svg><svg class="i" style="left:29px;top:4px" width="14" height="16" viewBox="0 0 14 16"><path d="M4 0.2 L13.9 3.8 L9.7 15.7 L0.2 10.8 Z" fill="#0e0e12"/><path d="M4.5 1.3 L6 1.8 L3.4 10.8 L1.5 9.9 Z" fill="#4a8aa8"/><path d="M5.9 1.3 L11.5 3.1 L8.6 13.2 L3.3 10.7 Z" fill="#7ccbf0"/><path d="M7.4 1.9 L9.6 2.6 L7 12.3 L4.8 11.3 Z" fill="#a6def8"/><path d="M12 4.2 L12.8 4.6 L9.6 14.4 L8.8 13.8 Z" fill="#f4f4f4"/></svg><div class="t lk" style="left:48px;top:6px;letter-spacing:0.303px;">1_20170406-01_</div><div class="t" style="top:6px;letter-spacing:0.111px;right:559px">(4)</div></div><div style="left:0px;top:419px;width:730px;height:24px;background:#484951"><svg class="i" style="left:13px;top:7.2px" width="5.5" height="10.5" viewBox="0 0 5.5 10.5"><path d="M0 0 L5.5 5.25 L0 10.5 Z" fill="#fff"/></svg><svg class="i" style="left:29px;top:4px" width="14" height="16" viewBox="0 0 14 16"><path d="M4 0.2 L13.9 3.8 L9.7 15.7 L0.2 10.8 Z" fill="#0e0e12"/><path d="M4.5 1.3 L6 1.8 L3.4 10.8 L1.5 9.9 Z" fill="#4a8aa8"/><path d="M5.9 1.3 L11.5 3.1 L8.6 13.2 L3.3 10.7 Z" fill="#7ccbf0"/><path d="M7.4 1.9 L9.6 2.6 L7 12.3 L4.8 11.3 Z" fill="#a6def8"/><path d="M12 4.2 L12.8 4.6 L9.6 14.4 L8.8 13.8 Z" fill="#f4f4f4"/></svg><div class="t lk" style="left:48px;top:6px;letter-spacing:0.326px;">14022018737</div><div class="t" style="top:6px;letter-spacing:0.111px;right:559px">(1)</div></div><div style="left:0px;top:444px;width:730px;height:24px;background:#52555e"><svg class="i" style="left:13px;top:7.2px" width="5.5" height="10.5" viewBox="0 0 5.5 10.5"><path d="M0 0 L5.5 5.25 L0 10.5 Z" fill="#fff"/></svg><svg class="i" style="left:29px;top:4px" width="14" height="16" viewBox="0 0 14 16"><path d="M4 0.2 L13.9 3.8 L9.7 15.7 L0.2 10.8 Z" fill="#0e0e12"/><path d="M4.5 1.3 L6 1.8 L3.4 10.8 L1.5 9.9 Z" fill="#4a8aa8"/><path d="M5.9 1.3 L11.5 3.1 L8.6 13.2 L3.3 10.7 Z" fill="#7ccbf0"/><path d="M7.4 1.9 L9.6 2.6 L7 12.3 L4.8 11.3 Z" fill="#a6def8"/><path d="M12 4.2 L12.8 4.6 L9.6 14.4 L8.8 13.8 Z" fill="#f4f4f4"/></svg><div class="t lk" style="left:48px;top:6px;letter-spacing:0.303px;">4_20170614-01_</div><div class="t" style="top:6px;letter-spacing:0.111px;right:559px">(5)</div></div></div>
<svg class="i" style="left:809px;top:152px" width="16" height="15" viewBox="0 0 16 15"><path d="M0.2 5 L14.9 0.5 L15.5 5.8 L9.8 12.6 L1.8 14.6 Z" fill="#0c0c0e"/><path d="M1.3 5.5 L14 1.5 L14.5 5.3 L8.9 7.3 L8.8 12 L2.3 13.6 Z" fill="#fafafa"/><path d="M1.9 5.6 L7.3 4.1 L7.6 7.6 L2.4 8.6 Z" fill="#12a0e6"/><path d="M7.9 3.7 L13.3 2.1 L13.8 5.1 L8.3 6.8 Z" fill="#e0087e"/><path d="M2.5 8.9 L7.6 7.9 L7.9 11.4 L2.9 12.7 Z" fill="#fae600"/><path d="M9.4 8.2 L13.4 6.7 L10 9.6 Z" fill="#f0f0f0"/></svg><div class="b" style="left:830px;top:154px;letter-spacing:-0.079px;">Sheet designation</div><svg class="i" style="left:971px;top:153px" width="10" height="14" viewBox="0 0 10 14"><path d="M5 0.4 L9.6 5.2 L0.4 5.2 Z" fill="#8e8f95"/><path d="M0.4 8.6 L9.6 8.6 L5 13.6 Z" fill="#f1f2fa"/><rect x="0.4" y="5.2" width="9.2" height="0.9" fill="#8f9098"/><rect x="0.4" y="7.7" width="9.2" height="0.9" fill="#8f9098"/></svg>
<svg class="i" style="left:990px;top:152px" width="14" height="16" viewBox="0 0 14 16"><path d="M4 0.2 L13.9 3.8 L9.7 15.7 L0.2 10.8 Z" fill="#0e0e12"/><path d="M4.5 1.3 L6 1.8 L3.4 10.8 L1.5 9.9 Z" fill="#4a8aa8"/><path d="M5.9 1.3 L11.5 3.1 L8.6 13.2 L3.3 10.7 Z" fill="#7ccbf0"/><path d="M7.4 1.9 L9.6 2.6 L7 12.3 L4.8 11.3 Z" fill="#a6def8"/><path d="M12 4.2 L12.8 4.6 L9.6 14.4 L8.8 13.8 Z" fill="#f4f4f4"/></svg><div class="b" style="left:1009px;top:154px;letter-spacing:-0.134px;">Job designation</div><svg class="i" style="left:1151px;top:153px" width="10" height="14" viewBox="0 0 10 14"><path d="M5 0.4 L9.6 5.2 L0.4 5.2 Z" fill="#e9ebf6"/><path d="M0.4 8.6 L9.6 8.6 L5 13.6 Z" fill="#f1f2fa"/><rect x="0.4" y="5.2" width="9.2" height="0.9" fill="#8f9098"/><rect x="0.4" y="7.7" width="9.2" height="0.9" fill="#8f9098"/></svg>
<svg class="i" style="left:1169px;top:152px" width="16" height="15" viewBox="0 0 16 15"><path d="M1.4 3.6 L12.6 1.2 L14.6 11.6 L3.4 14 Z" fill="#f4f4f4" stroke="#222" stroke-width="0.8"/><path d="M4 8.6 L7 5.2 L11 6 L12.2 10.6 L5.2 12 Z" fill="#6cc4ee"/><path d="M3.6 2.4 L3.9 4.4 M10.6 0.8 L10.9 2.8" stroke="#111" stroke-width="1.2"/></svg><div class="b" style="left:1189px;top:154px;letter-spacing:0.152px;">Customer Name</div><svg class="i" style="left:1331px;top:153px" width="10" height="14" viewBox="0 0 10 14"><path d="M5 0.4 L9.6 5.2 L0.4 5.2 Z" fill="#e9ebf6"/><path d="M0.4 8.6 L9.6 8.6 L5 13.6 Z" fill="#f1f2fa"/><rect x="0.4" y="5.2" width="9.2" height="0.9" fill="#8f9098"/><rect x="0.4" y="7.7" width="9.2" height="0.9" fill="#8f9098"/></svg>
<svg class="i" style="left:1349px;top:153px" width="16" height="16" viewBox="0 0 16 16"><path d="M1.4 0.4 L13.4 0.9 L13.4 2.2 L1.4 1.7 Z" fill="#0c0c10"/><path d="M1.5 1.8 L13.4 2.3 L13.4 3.5 L1.5 3 Z" fill="#169edc"/><path d="M1.5 3.1 L13.4 3.6 L13.4 4.8 L1.5 4.3 Z" fill="#e8148a"/><path d="M1.5 4.4 L13.4 4.9 L13.4 6.1 L1.5 5.6 Z" fill="#f4e018"/><path d="M12.6 1.4 L15.8 1.8 L15.6 15.4 L10.2 14.2 Z" fill="#1c1d22"/><path d="M2.8 6.2 L13 7 L9.8 13.6 L0.3 10.8 Z" fill="#fbfbfb" stroke="#16171a" stroke-width="0.8"/><rect x="13.6" y="3" width="1.3" height="2.4" fill="#58c8ee"/><rect x="13.2" y="10.6" width="1.3" height="2.6" fill="#58c8ee"/></svg><div class="b" style="left:1369px;top:154px;letter-spacing:0.217px;">Device</div><svg class="i" style="left:1511px;top:153px" width="10" height="14" viewBox="0 0 10 14"><path d="M5 0.4 L9.6 5.2 L0.4 5.2 Z" fill="#e9ebf6"/><path d="M0.4 8.6 L9.6 8.6 L5 13.6 Z" fill="#f1f2fa"/><rect x="0.4" y="5.2" width="9.2" height="0.9" fill="#8f9098"/><rect x="0.4" y="7.7" width="9.2" height="0.9" fill="#8f9098"/></svg>
<div style="left:1529px;top:153px;width:6px;height:14px;overflow:hidden"><svg class="i" style="left:0;top:0" width="14" height="14" viewBox="0 0 14 14"><circle cx="3.4" cy="4.6" r="2.1" fill="#18a0ec" stroke="#111" stroke-width="0.7"/><path d="M3.6 6.6 L6 12.6" stroke="#111" stroke-width="1.6"/><path d="M4.6 8.6 L7 8.6 L8 12 L6 12 Z" fill="#f0d020"/></svg></div>
<div style="left:805px;top:170px;width:747px;height:1px;background:#8c8d93"></div>
<div style="left:984px;top:151px;width:1px;height:489px;background:#8c8d93"></div>
<div style="left:1164px;top:151px;width:1px;height:489px;background:#8c8d93"></div>
<div style="left:1344px;top:151px;width:1px;height:489px;background:#8c8d93"></div>
<div style="left:1524px;top:151px;width:1px;height:489px;background:#8c8d93"></div>
<div style="left:1535px;top:151px;width:1px;height:506px;background:#8c8d93"></div>
<svg class="i" style="left:1539px;top:158px" width="11" height="10" viewBox="0 0 11 10"><path d="M7.4 5 L7.4 0.7 L0.7 0.7 L0.7 7.6 L5 7.6 M0.7 3 L7.4 3 M4 0.7 L4 5.2" fill="none" stroke="#f4f4f6" stroke-width="1.2"/><path d="M5.6 6 L10.4 6 L8 9 Z" fill="#f4f4f6"/></svg>
<div class="sb sbb" style="left:1537px;top:173px;width:13px;height:19px;"><svg class="i" style="left:2px;top:6px" width="9.5" height="6" viewBox="0 0 9.5 6"><path d="M0 6 L4.75 0 L9.5 6 Z" fill="#fff"/></svg></div>
<div class="sb sbb" style="left:1537px;top:620px;width:13px;height:19px;"><svg class="i" style="left:2px;top:7px" width="9.5" height="6" viewBox="0 0 9.5 6"><path d="M0 0 L9.5 0 L4.75 6 Z" fill="#fff"/></svg></div>
<div class="sb" style="left:1537px;top:340px;width:13px;height:217px;"></div>
<div style="left:1540px;top:443px;width:7px;height:1px;background:#f2f2f4"></div>
<div style="left:1540px;top:444px;width:7px;height:1px;background:#6e6f77"></div>
<div style="left:1540px;top:446px;width:7px;height:1px;background:#f2f2f4"></div>
<div style="left:1540px;top:447px;width:7px;height:1px;background:#6e6f77"></div>
<div style="left:1540px;top:449px;width:7px;height:1px;background:#f2f2f4"></div>
<div style="left:1540px;top:450px;width:7px;height:1px;background:#6e6f77"></div>
<div style="left:1540px;top:452px;width:7px;height:1px;background:#f2f2f4"></div>
<div style="left:1540px;top:453px;width:7px;height:1px;background:#6e6f77"></div>
<div style="left:1551px;top:171px;width:1px;height:469px;background:#7c7d84"></div>
<div style="left:1536px;top:639px;width:16px;height:1px;background:#8c8d93"></div>
<div style="left:805px;top:640px;width:730px;height:1px;background:#8c8d93"></div>
<div style="left:984px;top:640px;width:1px;height:17px;background:#8c8d93"></div>
<div class="sb sbb" style="left:987px;top:642px;width:19px;height:14px;"><svg class="i" style="left:6px;top:2px" width="6" height="10" viewBox="0 0 6 10"><path d="M6 0 L0 5.0 L6 10 Z" fill="#fff"/></svg></div>
<div class="sb sbb" style="left:1514px;top:642px;width:20px;height:14px;"><svg class="i" style="left:8px;top:2px" width="6" height="10" viewBox="0 0 6 10"><path d="M0 0 L6 5.0 L0 10 Z" fill="#fff"/></svg></div>
<div class="sb" style="left:1009px;top:642px;width:338px;height:14px;"></div>
<div style="left:1172px;top:645px;width:1px;height:7px;background:#f2f2f4"></div>
<div style="left:1173px;top:645px;width:1px;height:7px;background:#6e6f77"></div>
<div style="left:1175px;top:645px;width:1px;height:7px;background:#f2f2f4"></div>
<div style="left:1176px;top:645px;width:1px;height:7px;background:#6e6f77"></div>
<div style="left:1178px;top:645px;width:1px;height:7px;background:#f2f2f4"></div>
<div style="left:1179px;top:645px;width:1px;height:7px;background:#6e6f77"></div>
<div style="left:1181px;top:645px;width:1px;height:7px;background:#f2f2f4"></div>
<div style="left:1182px;top:645px;width:1px;height:7px;background:#6e6f77"></div>
<div style="left:15px;top:685px;width:1560px;height:25px;background:#484951"></div>
<div style="left:15px;top:680px;width:1560px;height:5px;background:linear-gradient(#b4b5b9,#9c9da2 40%,#8f9095)"></div>
<div style="left:15px;top:685px;width:1560px;height:1px;background:#26272b"></div>
<svg class="i" style="left:759px;top:681px" width="7.4" height="4.2" viewBox="0 0 7.4 4.2"><path d="M0 4.2 L3.7 0 L7.4 4.2 Z" fill="#3a3b41"/></svg>
<svg class="i" style="left:823px;top:681.3px" width="7.4" height="4" viewBox="0 0 7.4 4"><path d="M0 0 L7.4 0 L3.7 4 Z" fill="#3a3b41"/></svg>
<div style="left:785px;top:682px;width:2px;height:2px;background:#3a3b41"></div>
<div style="left:789px;top:682px;width:2px;height:2px;background:#3a3b41"></div>
<div style="left:793px;top:682px;width:2px;height:2px;background:#3a3b41"></div>
<div style="left:797px;top:682px;width:2px;height:2px;background:#3a3b41"></div>
<div style="left:801px;top:682px;width:2px;height:2px;background:#3a3b41"></div>
<div class="pn" style="left:15px;top:709px;width:1552px;height:213px;box-shadow:3px 4px 5px rgba(20,20,25,.55)"></div>
<div style="left:79px;top:709px;width:1488px;height:1px;background:#b8b9bd"></div>
<div style="left:16px;top:689px;width:64px;height:21px;background:#4c4d56;border-top:1px solid #74757c;border-left:1px solid #a4a5aa;border-right:1px solid #17171a"></div>
<div class="t" style="left:32px;top:693px;letter-spacing:0.220px;color:#ff9000">Detail</div>
<div style="left:80px;top:689px;width:88px;height:20px;background:#62636b;border-top:1px solid #7e7f86;border-left:1px solid #74757c;border-right:1px solid #1c1c20"></div>
<div class="t" style="left:97px;top:693px;letter-spacing:0.248px;">Combiner</div>
<div style="left:168px;top:689px;width:70px;height:20px;background:#62636b;border-top:1px solid #7e7f86;border-left:1px solid #74757c;border-right:1px solid #1c1c20"></div>
<div class="t" style="left:185px;top:693px;letter-spacing:0.194px;">Queue</div>
<div style="left:238px;top:689px;width:115px;height:20px;background:#62636b;border-top:1px solid #7e7f86;border-left:1px solid #74757c;border-right:1px solid #1c1c20"></div>
<div class="t" style="left:279px;top:693px;letter-spacing:0.164px;">Messages</div>
<div style="left:353px;top:689px;width:68px;height:20px;background:#62636b;border-top:1px solid #7e7f86;border-left:1px solid #74757c;border-right:1px solid #1c1c20"></div>
<div class="t" style="left:370px;top:693px;letter-spacing:-0.003px;">Status</div>
<div style="left:32px;top:718px;width:451px;height:200px;border:1px solid #3b3c42"></div><div style="left:33px;top:719px;width:451px;height:200px;border:1px solid #6a6b72"></div><div class="lg" style="left:40px;top:713px;letter-spacing:-0.100px;">Front side</div><div style="left:44px;top:736px;width:200px;height:140px;background:#fff;border:1px solid #a8a9ad"><svg class="i" style="left:0;top:0" width="198" height="138" viewBox="1 1 198 138"><rect x="31" y="28" width="69" height="97" fill="#d5d8ec"/><rect x="100" y="28" width="26.5" height="49" fill="#fdfdfe"/><rect x="126.5" y="28" width="42.5" height="49" fill="#d5d8ec"/><rect x="34" y="32" width="15" height="6" fill="#c2c6dc"/><rect x="52" y="32" width="5" height="6" fill="#c2c6dc"/><rect x="61" y="32" width="13" height="6" fill="#c2c6dc"/><rect x="77" y="32" width="5" height="12" fill="#c2c6dc"/><rect x="88" y="33" width="2" height="6" fill="#c2c6dc"/><rect x="34" y="46" width="15" height="5" fill="#c2c6dc"/><rect x="52" y="46" width="5" height="5" fill="#c2c6dc"/><rect x="61" y="46" width="13" height="6" fill="#c2c6dc"/><rect x="77" y="45" width="5" height="6" fill="#c2c6dc"/><rect x="88" y="48" width="2" height="5" fill="#c2c6dc"/><rect x="40" y="60" width="10" height="5" fill="#c2c6dc"/><rect x="58" y="60" width="18" height="6" fill="#c2c6dc"/><rect x="78" y="60" width="4" height="6" fill="#c2c6dc"/><rect x="74" y="77" width="15" height="4" fill="#eef0fa"/><rect x="128" y="33" width="6" height="12" fill="#b4b8d0"/><rect x="138" y="33" width="4" height="11" fill="#b4b8d0"/><rect x="128" y="47" width="6" height="12" fill="#b4b8d0"/><rect x="138" y="47" width="4" height="12" fill="#b4b8d0"/><rect x="144" y="48" width="3" height="10" fill="#b4b8d0"/><rect x="149" y="47" width="16" height="12" fill="#b4b8d0"/><rect x="160" y="63" width="5" height="10" fill="#b4b8d0"/><rect x="104.5" y="46" width="17.5" height="13" fill="#16181c"/><circle cx="113.25" cy="52.5" r="4.9" fill="#8f979f"/><circle cx="113.25" cy="52.5" r="2.9" fill="#23262c"/><rect x="104.5" y="61.2" width="17.5" height="11.8" fill="#16181c"/><circle cx="113.25" cy="67.10000000000001" r="4.300000000000001" fill="#8f979f"/><circle cx="113.25" cy="67.10000000000001" r="2.3000000000000003" fill="#23262c"/><rect x="128" y="61.2" width="18" height="11.8" fill="#16181c"/><circle cx="137.0" cy="67.10000000000001" r="4.300000000000001" fill="#a8c0d8"/><circle cx="137.0" cy="67.10000000000001" r="2.3000000000000003" fill="#23262c"/><rect x="100" y="77" width="69" height="48" fill="#2a3a4a"/><rect x="100" y="77" width="28" height="18" fill="#1c242c"/><rect x="128" y="77" width="41" height="10" fill="#3d6285"/><rect x="150" y="82" width="19" height="13" fill="#2b4258"/><rect x="107" y="82" width="5" height="4" fill="#c83020"/><rect x="100" y="108" width="69" height="17" fill="#4577a6"/><rect x="100" y="108" width="18" height="17" fill="#3f6c98"/><rect x="146" y="111" width="23" height="14" fill="#3a4650"/><rect x="118" y="112" width="10" height="13" fill="#1c2026"/><rect x="120" y="110" width="5" height="9" fill="#d8dce0"/><rect x="100" y="95" width="69" height="13" fill="#989a9c"/><rect x="102" y="95" width="1" height="13" fill="#6c6e72"/><rect x="106" y="95" width="1" height="13" fill="#6c6e72"/><rect x="110" y="95" width="1" height="13" fill="#6c6e72"/><rect x="114" y="95" width="1" height="13" fill="#6c6e72"/><rect x="118" y="95" width="1" height="13" fill="#6c6e72"/><rect x="122" y="95" width="1" height="13" fill="#6c6e72"/><rect x="126" y="95" width="1" height="13" fill="#6c6e72"/><rect x="130" y="95" width="1" height="13" fill="#6c6e72"/><rect x="134" y="95" width="1" height="13" fill="#6c6e72"/><rect x="138" y="95" width="1" height="13" fill="#6c6e72"/><rect x="142" y="95" width="1" height="13" fill="#6c6e72"/><rect x="146" y="95" width="1" height="13" fill="#6c6e72"/><rect x="150" y="95" width="1" height="13" fill="#6c6e72"/><rect x="154" y="95" width="1" height="13" fill="#6c6e72"/><rect x="158" y="95" width="1" height="13" fill="#6c6e72"/><rect x="162" y="95" width="1" height="13" fill="#6c6e72"/><rect x="166" y="95" width="1" height="13" fill="#6c6e72"/><circle cx="133.7" cy="99.7" r="12.6" fill="#dfe3e6"/><circle cx="133.7" cy="99.7" r="11.4" fill="#1a1e24"/><circle cx="133.7" cy="99.7" r="7.4" fill="#3a4048"/><circle cx="133.7" cy="99.7" r="6" fill="#15181c"/><rect x="152" y="88" width="12" height="3" fill="#1a1c20"/><rect x="61" y="95" width="18" height="12" fill="#6f7f6a"/><rect x="61" y="95" width="6" height="5" fill="#e0c040"/><circle cx="70" cy="101" r="4" fill="#30343a"/><rect x="75" y="98" width="4" height="6" fill="#5aa0c0"/><path d="M31 28.4 H169" stroke="#2aa8e0" stroke-width="0.9" stroke-opacity=".8" stroke-dasharray="2 10"/><path d="M34 28.4 H169" stroke="#e0188c" stroke-width="0.9" stroke-opacity=".8" stroke-dasharray="2 10"/><path d="M37 28.4 H169" stroke="#f0dc20" stroke-width="0.9" stroke-opacity=".8" stroke-dasharray="2 10"/><path d="M40 28.4 H169" stroke="#333" stroke-width="0.9" stroke-opacity=".8" stroke-dasharray="2 10"/><path d="M22 126.7 H75" stroke="#44464e" stroke-width="0.8" stroke-dasharray="3 1 1 1 5 1"/><rect x="158" y="131" width="6" height="5.6" fill="#0c0c10"/><rect x="180" y="105" width="0.9" height="3.8" fill="#222"/></svg></div><div style="left:251px;top:736px;width:221px;height:172px;border:1px solid #c4c5c9;background:#484951"><div style="left:0px;top:0px;width:219px;height:21px;background:#52555e;border-bottom:1px solid #8c8d93"><div class="t" style="left:7px;top:4px;font-kerning:normal">B: Black</div></div><div style="left:0px;top:21px;width:219px;height:21px;background:#484951;border-bottom:1px solid #8c8d93"><div class="t" style="left:7px;top:4px;font-kerning:normal">C: Cyan</div></div><div style="left:0px;top:42px;width:219px;height:21px;background:#52555e;border-bottom:1px solid #8c8d93"><div class="t" style="left:7px;top:4px;font-kerning:normal">M: Magenta</div></div><div style="left:0px;top:63px;width:219px;height:21px;background:#484951;border-bottom:1px solid #8c8d93"><div class="t" style="left:7px;top:4px;font-kerning:normal">Y: Yellow</div></div><div style="left:0px;top:84px;width:219px;height:21px;background:#52555e;border-bottom:1px solid #8c8d93"><div class="t" style="left:7px;top:4px;font-kerning:normal">X: PANTONE 279 C</div></div></div><div style="left:45px;top:890px;width:11px;height:11px;background:#e4e6f2"><svg class="i" style="left:1px;top:2px" width="9" height="7" viewBox="0 0 9 7"><path d="M0.5 3.5 L8 3.5 M5 0.8 L8 3.5 L5 6.2" fill="none" stroke="#33343a" stroke-width="1.1"/></svg></div><div style="left:59px;top:885px;width:54px;height:21px;border:1px solid #8c8d93;background:#484951"><div class="t" style="top:3px;letter-spacing:0.326px;right:4px">745</div></div><div class="t" style="left:117px;top:889px;letter-spacing:0.004px;">mm</div><div style="left:150px;top:890px;width:11px;height:11px;background:#e4e6f2"><svg class="i" style="left:2px;top:1px" width="7" height="9" viewBox="0 0 7 9"><path d="M3.5 8.5 L3.5 1 M0.8 4 L3.5 1 L6.2 4" fill="none" stroke="#33343a" stroke-width="1.1"/></svg></div><div style="left:164px;top:885px;width:54px;height:21px;border:1px solid #8c8d93;background:#484951"><div class="t" style="top:3px;letter-spacing:0.326px;right:4px">605</div></div><div class="t" style="left:222px;top:889px;letter-spacing:0.004px;">mm</div>
<div style="left:495px;top:718px;width:451px;height:200px;border:1px solid #3b3c42"></div><div style="left:496px;top:719px;width:451px;height:200px;border:1px solid #6a6b72"></div><div class="lg" style="left:503px;top:713px;letter-spacing:0.032px;">Perfecting</div><div style="left:507px;top:736px;width:200px;height:140px;background:#fff;border:1px solid #a8a9ad"><svg class="i" style="left:0;top:0" width="198" height="138" viewBox="1 1 198 138"><rect x="31" y="28.5" width="69" height="48.5" fill="#1e1d20"/><rect x="31" y="28.5" width="22" height="16" fill="#3e4044"/><circle cx="41" cy="34" r="6.5" fill="#1a1a1c"/><rect x="68" y="28.5" width="13.5" height="15" fill="#c2222c"/><rect x="82" y="29" width="18" height="14" fill="#8a8486"/><rect x="90" y="40" width="9" height="7" fill="#b42a30"/><rect x="31" y="44.5" width="69" height="13.5" fill="#141416"/><rect x="31" y="58" width="18" height="19" fill="#34383e"/><rect x="40" y="68" width="8" height="4" fill="#c02830"/><rect x="52" y="64" width="30" height="13" fill="#26303c"/><rect x="84" y="60" width="16" height="17" fill="#2a2a30"/><circle cx="65" cy="52" r="14.6" fill="#8f8f88"/><circle cx="65" cy="52" r="13.4" fill="#e9e4c6"/><circle cx="65" cy="52" r="8" fill="#dcd6b4"/><circle cx="67" cy="54" r="1.6" fill="#2a8a3a"/><rect x="100" y="28" width="26.5" height="49" fill="#fdfdfe"/><rect x="126.5" y="28" width="42.5" height="49" fill="#d4dae9"/><rect x="104.5" y="32" width="17.5" height="12.5" fill="#16181c"/><circle cx="113.25" cy="38.25" r="4.65" fill="#3a3e44"/><circle cx="113.25" cy="38.25" r="2.65" fill="#23262c"/><rect x="104.5" y="46.5" width="17.5" height="12" fill="#16181c"/><circle cx="113.2" cy="52.5" r="4.6" fill="#e4dfc2"/><rect x="104.5" y="61" width="17.5" height="12" fill="#16181c"/><rect x="105" y="65" width="16" height="4" fill="#c8ccd0"/><circle cx="113.2" cy="67" r="4.6" fill="#15171b"/><rect x="128.4" y="32.5" width="5.3" height="12" fill="#5f90a8"/><rect x="129" y="36" width="4" height="4" fill="#9ac070"/><rect x="135" y="33" width="12" height="11" fill="#b3b8cf"/><rect x="151" y="33" width="5" height="12" fill="#b3b8cf"/><rect x="158" y="33" width="6" height="12" fill="#b3b8cf"/><rect x="128" y="47" width="6" height="12" fill="#b3b8cf"/><rect x="137" y="47" width="5" height="12" fill="#b3b8cf"/><rect x="151" y="47" width="5" height="12" fill="#b3b8cf"/><rect x="158" y="47" width="6" height="12" fill="#b3b8cf"/><rect x="160" y="63" width="5" height="10" fill="#b3b8cf"/><rect x="128" y="61" width="18" height="12" fill="#16181c"/><circle cx="134" cy="67" r="4.6" fill="#e6e1c6"/><rect x="141" y="62.5" width="4" height="9" fill="#d8dce0"/><rect x="31" y="77" width="42.3" height="48" fill="#d4dae9"/><rect x="73.3" y="77" width="26.7" height="48" fill="#fdfdfe"/><rect x="54" y="81" width="18" height="12" fill="#17191d"/><circle cx="65.5" cy="87" r="4.8" fill="#aeb6bc"/><rect x="55" y="82.5" width="3.4" height="9" fill="#d8dce0"/><rect x="34" y="81" width="4" height="10" fill="#b3b8cf"/><rect x="44" y="95" width="5" height="11" fill="#b3b8cf"/><rect x="51" y="96" width="3" height="9" fill="#b3b8cf"/><rect x="57" y="95" width="6" height="11" fill="#b3b8cf"/><rect x="66" y="95" width="6" height="11" fill="#b3b8cf"/><rect x="77.8" y="81" width="17.7" height="12" fill="#16181c"/><circle cx="86.6" cy="87" r="4.4" fill="#2c3036"/><rect x="93" y="84" width="2.5" height="6" fill="#d0d4d8"/><rect x="77.8" y="95" width="17.7" height="12" fill="#16181c"/><rect x="80" y="98" width="13" height="6" fill="#7a7e84"/><circle cx="86.6" cy="101" r="4" fill="#1c1e22"/><rect x="100" y="77" width="69" height="48" fill="#dedcd6"/><rect x="100" y="77" width="12" height="48" fill="#cfcac0"/><path d="M112 77 L118 77 L106 125 L101 125 Z" fill="#8a7a5a"/><rect x="128" y="77" width="20" height="12" fill="#f4f4f2"/><rect x="152" y="77" width="17" height="8" fill="#2a2620"/><rect x="148" y="85" width="6" height="10" fill="#9a9488"/><rect x="142" y="112" width="12" height="13" fill="#dcc23c"/><rect x="120" y="112" width="22" height="13" fill="#bdb8ae"/><rect x="154" y="108" width="15" height="17" fill="#eceae6"/><rect x="126" y="114" width="14" height="11" fill="#2a2c30"/><rect x="100" y="95" width="69" height="13" fill="#121418"/><rect x="101" y="97" width="20" height="8" fill="#24272d"/><rect x="150" y="97" width="18" height="8" fill="#24272d"/><circle cx="133.7" cy="99.7" r="13" fill="#2a2e34"/><circle cx="133.7" cy="99.7" r="11.6" fill="#0e1014"/><circle cx="133.7" cy="99.7" r="7.6" fill="#1e2228"/><path d="M133.7 99.7 L137.6 94.6 M133.7 99.7 L130.6 97" stroke="#e8e8e8" stroke-width="0.9"/><path d="M31 28.4 H169" stroke="#2aa8e0" stroke-width="0.9" stroke-opacity=".8" stroke-dasharray="2 10"/><path d="M34 28.4 H169" stroke="#e0188c" stroke-width="0.9" stroke-opacity=".8" stroke-dasharray="2 10"/><path d="M37 28.4 H169" stroke="#f0dc20" stroke-width="0.9" stroke-opacity=".8" stroke-dasharray="2 10"/><path d="M40 28.4 H169" stroke="#333" stroke-width="0.9" stroke-opacity=".8" stroke-dasharray="2 10"/><path d="M22 126.7 H75" stroke="#44464e" stroke-width="0.8" stroke-dasharray="3 1 1 1 5 1"/><rect x="158" y="131" width="6" height="5.6" fill="#0c0c10"/><rect x="19" y="105" width="0.9" height="3.8" fill="#222"/></svg></div><div style="left:714px;top:736px;width:221px;height:172px;border:1px solid #c4c5c9;background:#484951"><div style="left:0px;top:0px;width:219px;height:21px;background:#52555e;border-bottom:1px solid #8c8d93"><div class="t" style="left:7px;top:4px;font-kerning:normal">B: Black</div></div><div style="left:0px;top:21px;width:219px;height:21px;background:#484951;border-bottom:1px solid #8c8d93"><div class="t" style="left:7px;top:4px;font-kerning:normal">C: Cyan</div></div><div style="left:0px;top:42px;width:219px;height:21px;background:#52555e;border-bottom:1px solid #8c8d93"><div class="t" style="left:7px;top:4px;font-kerning:normal">M: Magenta</div></div><div style="left:0px;top:63px;width:219px;height:21px;background:#484951;border-bottom:1px solid #8c8d93"><div class="t" style="left:7px;top:4px;font-kerning:normal">Y: Yellow</div></div><div style="left:0px;top:84px;width:219px;height:21px;background:#52555e;border-bottom:1px solid #8c8d93"><div class="t" style="left:7px;top:4px;font-kerning:normal">X: PANTONE 279 C</div></div></div><div style="left:508px;top:890px;width:11px;height:11px;background:#e4e6f2"><svg class="i" style="left:1px;top:2px" width="9" height="7" viewBox="0 0 9 7"><path d="M0.5 3.5 L8 3.5 M5 0.8 L8 3.5 L5 6.2" fill="none" stroke="#33343a" stroke-width="1.1"/></svg></div><div style="left:522px;top:885px;width:54px;height:21px;border:1px solid #8c8d93;background:#484951"><div class="t" style="top:3px;letter-spacing:0.326px;right:4px">745</div></div><div class="t" style="left:580px;top:889px;letter-spacing:0.004px;">mm</div><div style="left:613px;top:890px;width:11px;height:11px;background:#e4e6f2"><svg class="i" style="left:2px;top:1px" width="7" height="9" viewBox="0 0 7 9"><path d="M3.5 8.5 L3.5 1 M0.8 4 L3.5 1 L6.2 4" fill="none" stroke="#33343a" stroke-width="1.1"/></svg></div><div style="left:627px;top:885px;width:54px;height:21px;border:1px solid #8c8d93;background:#484951"><div class="t" style="top:3px;letter-spacing:0.326px;right:4px">605</div></div><div class="t" style="left:685px;top:889px;letter-spacing:0.004px;">mm</div>
<div class="b" style="left:970px;top:720px;letter-spacing:-0.061px;">Designation</div>
<div style="left:1043px;top:726px;width:517px;height:1px;background:#6c6d74"></div>
<div class="t" style="left:970px;top:753px;letter-spacing:0.164px;">Job Number</div>
<div style="left:1090px;top:749px;width:468px;height:21px;border:1px solid #8c8d93;background:#484951"><div class="t" style="left:3px;top:3px;letter-spacing:0.272px;">3_Lay_</div></div>
<div class="t" style="left:970px;top:786px;letter-spacing:0.196px;">Job designation</div>
<div style="left:1090px;top:782px;width:468px;height:21px;border:1px solid #8c8d93;background:#484951"><div class="t" style="left:3px;top:3px;letter-spacing:0.246px;">Sinn</div></div>
<div class="t" style="left:970px;top:819px;letter-spacing:0.172px;">Sheet designation</div>
<div style="left:1090px;top:815px;width:468px;height:21px;border:1px solid #8c8d93;background:#484951"><div class="t" style="left:3px;top:3px;letter-spacing:0.216px;">06042017_FB 002</div></div>
<div class="t" style="left:970px;top:852px;letter-spacing:0.126px;">Customer name</div>
<div style="left:1090px;top:848px;width:468px;height:21px;border:1px solid #8c8d93;background:#484951"><div class="t" style="left:3px;top:3px;letter-spacing:0.218px;">Schneider</div></div>
<div class="t" style="left:970px;top:885px;letter-spacing:0.150px;">Creation date</div>
<div style="left:1090px;top:881px;width:468px;height:21px;border:1px solid #8c8d93;background:#484951"><div class="t" style="left:3px;top:3px;letter-spacing:0.079px;">4/6/2017 1:48 PM</div></div>
</body></html>
